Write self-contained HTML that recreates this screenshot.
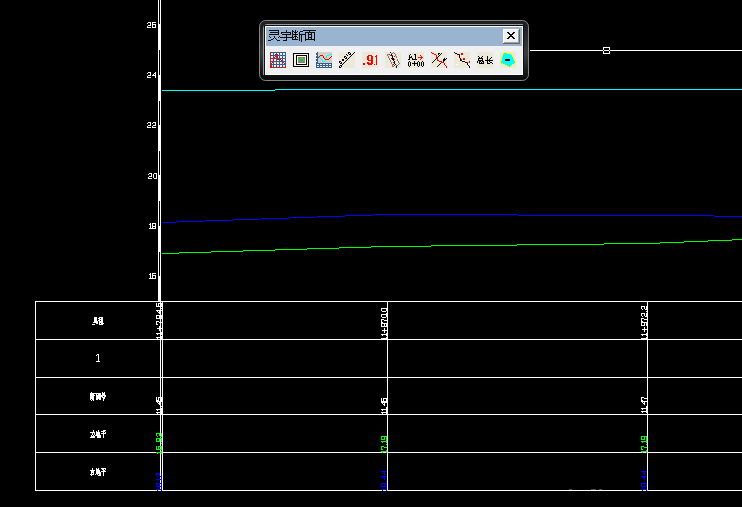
<!DOCTYPE html>
<html><head><meta charset="utf-8">
<style>
html,body{margin:0;padding:0;background:#000;font-family:"Liberation Sans",sans-serif;width:742px;height:507px;overflow:hidden;}
svg{position:absolute;left:0;top:0;display:block;}
#tb{position:absolute;left:259px;top:20px;width:270px;height:61px;}
</style></head><body>
<svg width="742" height="507" viewBox="0 0 742 507" shape-rendering="crispEdges">
<rect x="158" y="0" width="1" height="301" fill="#ffffff"/>
<rect x="160" y="0" width="1" height="301" fill="#ffffff"/>
<rect x="159" y="24" width="1" height="26" fill="#ffffff"/>
<rect x="159" y="75" width="1" height="26" fill="#ffffff"/>
<rect x="159" y="125" width="1" height="26" fill="#ffffff"/>
<rect x="159" y="175" width="1" height="26" fill="#ffffff"/>
<rect x="159" y="226" width="1" height="26" fill="#ffffff"/>
<rect x="159" y="276" width="1" height="25" fill="#ffffff"/>
<rect x="148" y="22" width="3" height="1" fill="#ffffff"/>
<rect x="147" y="23" width="1" height="1" fill="#ffffff"/>
<rect x="150" y="23" width="1" height="1" fill="#ffffff"/>
<rect x="150" y="24" width="1" height="1" fill="#ffffff"/>
<rect x="148" y="25" width="3" height="1" fill="#ffffff"/>
<rect x="147" y="26" width="1" height="1" fill="#ffffff"/>
<rect x="147" y="27" width="4" height="1" fill="#ffffff"/>
<rect x="152" y="22" width="4" height="1" fill="#ffffff"/>
<rect x="152" y="23" width="1" height="1" fill="#ffffff"/>
<rect x="152" y="24" width="4" height="1" fill="#ffffff"/>
<rect x="152" y="25" width="1" height="1" fill="#ffffff"/>
<rect x="155" y="25" width="1" height="1" fill="#ffffff"/>
<rect x="152" y="26" width="1" height="1" fill="#ffffff"/>
<rect x="155" y="26" width="1" height="1" fill="#ffffff"/>
<rect x="152" y="27" width="4" height="1" fill="#ffffff"/>
<rect x="148" y="72" width="3" height="1" fill="#ffffff"/>
<rect x="147" y="73" width="1" height="1" fill="#ffffff"/>
<rect x="150" y="73" width="1" height="1" fill="#ffffff"/>
<rect x="150" y="74" width="1" height="1" fill="#ffffff"/>
<rect x="148" y="75" width="3" height="1" fill="#ffffff"/>
<rect x="147" y="76" width="1" height="1" fill="#ffffff"/>
<rect x="147" y="77" width="4" height="1" fill="#ffffff"/>
<rect x="155" y="72" width="1" height="1" fill="#ffffff"/>
<rect x="154" y="73" width="2" height="1" fill="#ffffff"/>
<rect x="153" y="74" width="1" height="1" fill="#ffffff"/>
<rect x="155" y="74" width="1" height="1" fill="#ffffff"/>
<rect x="152" y="75" width="4" height="1" fill="#ffffff"/>
<rect x="155" y="76" width="1" height="1" fill="#ffffff"/>
<rect x="155" y="77" width="1" height="1" fill="#ffffff"/>
<rect x="148" y="122" width="3" height="1" fill="#ffffff"/>
<rect x="147" y="123" width="1" height="1" fill="#ffffff"/>
<rect x="150" y="123" width="1" height="1" fill="#ffffff"/>
<rect x="150" y="124" width="1" height="1" fill="#ffffff"/>
<rect x="148" y="125" width="3" height="1" fill="#ffffff"/>
<rect x="147" y="126" width="1" height="1" fill="#ffffff"/>
<rect x="147" y="127" width="4" height="1" fill="#ffffff"/>
<rect x="153" y="122" width="3" height="1" fill="#ffffff"/>
<rect x="152" y="123" width="1" height="1" fill="#ffffff"/>
<rect x="155" y="123" width="1" height="1" fill="#ffffff"/>
<rect x="155" y="124" width="1" height="1" fill="#ffffff"/>
<rect x="153" y="125" width="3" height="1" fill="#ffffff"/>
<rect x="152" y="126" width="1" height="1" fill="#ffffff"/>
<rect x="152" y="127" width="4" height="1" fill="#ffffff"/>
<rect x="149" y="173" width="3" height="1" fill="#ffffff"/>
<rect x="148" y="174" width="1" height="1" fill="#ffffff"/>
<rect x="151" y="174" width="1" height="1" fill="#ffffff"/>
<rect x="151" y="175" width="1" height="1" fill="#ffffff"/>
<rect x="149" y="176" width="3" height="1" fill="#ffffff"/>
<rect x="148" y="177" width="1" height="1" fill="#ffffff"/>
<rect x="148" y="178" width="4" height="1" fill="#ffffff"/>
<rect x="154" y="173" width="3" height="1" fill="#ffffff"/>
<rect x="153" y="174" width="1" height="1" fill="#ffffff"/>
<rect x="156" y="174" width="1" height="1" fill="#ffffff"/>
<rect x="153" y="175" width="1" height="1" fill="#ffffff"/>
<rect x="156" y="175" width="1" height="1" fill="#ffffff"/>
<rect x="153" y="176" width="1" height="1" fill="#ffffff"/>
<rect x="156" y="176" width="1" height="1" fill="#ffffff"/>
<rect x="153" y="177" width="1" height="1" fill="#ffffff"/>
<rect x="156" y="177" width="1" height="1" fill="#ffffff"/>
<rect x="154" y="178" width="3" height="1" fill="#ffffff"/>
<rect x="150" y="223" width="1" height="1" fill="#ffffff"/>
<rect x="149" y="224" width="2" height="1" fill="#ffffff"/>
<rect x="150" y="225" width="1" height="1" fill="#ffffff"/>
<rect x="150" y="226" width="1" height="1" fill="#ffffff"/>
<rect x="150" y="227" width="1" height="1" fill="#ffffff"/>
<rect x="149" y="228" width="3" height="1" fill="#ffffff"/>
<rect x="152" y="223" width="4" height="1" fill="#ffffff"/>
<rect x="152" y="224" width="1" height="1" fill="#ffffff"/>
<rect x="155" y="224" width="1" height="1" fill="#ffffff"/>
<rect x="152" y="225" width="1" height="1" fill="#ffffff"/>
<rect x="155" y="225" width="1" height="1" fill="#ffffff"/>
<rect x="152" y="226" width="4" height="1" fill="#ffffff"/>
<rect x="152" y="227" width="1" height="1" fill="#ffffff"/>
<rect x="155" y="227" width="1" height="1" fill="#ffffff"/>
<rect x="152" y="228" width="4" height="1" fill="#ffffff"/>
<rect x="150" y="273" width="1" height="1" fill="#ffffff"/>
<rect x="149" y="274" width="2" height="1" fill="#ffffff"/>
<rect x="150" y="275" width="1" height="1" fill="#ffffff"/>
<rect x="150" y="276" width="1" height="1" fill="#ffffff"/>
<rect x="150" y="277" width="1" height="1" fill="#ffffff"/>
<rect x="149" y="278" width="3" height="1" fill="#ffffff"/>
<rect x="152" y="273" width="4" height="1" fill="#ffffff"/>
<rect x="152" y="274" width="1" height="1" fill="#ffffff"/>
<rect x="152" y="275" width="4" height="1" fill="#ffffff"/>
<rect x="152" y="276" width="1" height="1" fill="#ffffff"/>
<rect x="155" y="276" width="1" height="1" fill="#ffffff"/>
<rect x="152" y="277" width="1" height="1" fill="#ffffff"/>
<rect x="155" y="277" width="1" height="1" fill="#ffffff"/>
<rect x="152" y="278" width="4" height="1" fill="#ffffff"/>
<rect x="530" y="50" width="212" height="1" fill="#ffffff"/>
<rect x="603.5" y="47.5" width="6" height="6" fill="none" stroke="#fff" stroke-width="1"/>
<rect x="603" y="50" width="1" height="1" fill="#000"/>
<rect x="609" y="50" width="1" height="1" fill="#000"/>
<rect x="162" y="90" width="113" height="1" fill="#00ffff"/>
<rect x="275" y="89" width="467" height="1" fill="#00ffff"/>
<rect x="162" y="222" width="15" height="1" fill="#0000ff"/>
<rect x="177" y="221" width="28" height="1" fill="#0000ff"/>
<rect x="205" y="220" width="28" height="1" fill="#0000ff"/>
<rect x="233" y="219" width="28" height="1" fill="#0000ff"/>
<rect x="261" y="218" width="28" height="1" fill="#0000ff"/>
<rect x="289" y="217" width="28" height="1" fill="#0000ff"/>
<rect x="317" y="216" width="28" height="1" fill="#0000ff"/>
<rect x="345" y="215" width="28" height="1" fill="#0000ff"/>
<rect x="373" y="214" width="145" height="1" fill="#0000ff"/>
<rect x="518" y="215" width="196" height="1" fill="#0000ff"/>
<rect x="714" y="216" width="28" height="1" fill="#0000ff"/>
<rect x="162" y="253" width="17" height="1" fill="#00ff00"/>
<rect x="179" y="252" width="32" height="1" fill="#00ff00"/>
<rect x="211" y="251" width="32" height="1" fill="#00ff00"/>
<rect x="243" y="250" width="32" height="1" fill="#00ff00"/>
<rect x="275" y="249" width="32" height="1" fill="#00ff00"/>
<rect x="307" y="248" width="32" height="1" fill="#00ff00"/>
<rect x="339" y="247" width="32" height="1" fill="#00ff00"/>
<rect x="371" y="246" width="60" height="1" fill="#00ff00"/>
<rect x="431" y="245" width="86" height="1" fill="#00ff00"/>
<rect x="517" y="244" width="87" height="1" fill="#00ff00"/>
<rect x="604" y="243" width="56" height="1" fill="#00ff00"/>
<rect x="660" y="242" width="24" height="1" fill="#00ff00"/>
<rect x="684" y="241" width="24" height="1" fill="#00ff00"/>
<rect x="708" y="240" width="24" height="1" fill="#00ff00"/>
<rect x="732" y="239" width="10" height="1" fill="#00ff00"/>
<rect x="35" y="301" width="707" height="1" fill="#ffffff"/>
<rect x="35" y="339" width="707" height="1" fill="#ffffff"/>
<rect x="35" y="377" width="707" height="1" fill="#ffffff"/>
<rect x="35" y="414" width="707" height="1" fill="#ffffff"/>
<rect x="35" y="452" width="707" height="1" fill="#ffffff"/>
<rect x="35" y="490" width="707" height="1" fill="#ffffff"/>
<rect x="35" y="301" width="1" height="190" fill="#ffffff"/>
<rect x="160" y="301" width="1" height="190" fill="#ffffff"/>
<rect x="162" y="301" width="1" height="190" fill="#ffffff"/>
<rect x="387" y="301" width="1" height="190" fill="#ffffff"/>
<rect x="647" y="301" width="1" height="190" fill="#ffffff"/>
<rect x="569" y="489" width="3" height="1" fill="#505050"/>
<rect x="591" y="489" width="5" height="1" fill="#505050"/>
<rect x="599" y="489" width="3" height="1" fill="#505050"/>
<rect x="156" y="337" width="1" height="1" fill="#ffffff"/>
<rect x="157" y="338" width="1" height="1" fill="#ffffff"/>
<rect x="157" y="337" width="1" height="1" fill="#ffffff"/>
<rect x="158" y="337" width="1" height="1" fill="#ffffff"/>
<rect x="159" y="337" width="1" height="1" fill="#ffffff"/>
<rect x="160" y="337" width="1" height="1" fill="#ffffff"/>
<rect x="161" y="338" width="1" height="1" fill="#ffffff"/>
<rect x="161" y="337" width="1" height="1" fill="#ffffff"/>
<rect x="161" y="336" width="1" height="1" fill="#ffffff"/>
<rect x="156" y="333" width="1" height="1" fill="#ffffff"/>
<rect x="157" y="334" width="1" height="1" fill="#ffffff"/>
<rect x="157" y="333" width="1" height="1" fill="#ffffff"/>
<rect x="158" y="333" width="1" height="1" fill="#ffffff"/>
<rect x="159" y="333" width="1" height="1" fill="#ffffff"/>
<rect x="160" y="333" width="1" height="1" fill="#ffffff"/>
<rect x="161" y="334" width="1" height="1" fill="#ffffff"/>
<rect x="161" y="333" width="1" height="1" fill="#ffffff"/>
<rect x="161" y="332" width="1" height="1" fill="#ffffff"/>
<rect x="157" y="328" width="1" height="1" fill="#ffffff"/>
<rect x="158" y="328" width="1" height="1" fill="#ffffff"/>
<rect x="159" y="330" width="1" height="1" fill="#ffffff"/>
<rect x="159" y="329" width="1" height="1" fill="#ffffff"/>
<rect x="159" y="328" width="1" height="1" fill="#ffffff"/>
<rect x="159" y="327" width="1" height="1" fill="#ffffff"/>
<rect x="159" y="326" width="1" height="1" fill="#ffffff"/>
<rect x="160" y="328" width="1" height="1" fill="#ffffff"/>
<rect x="161" y="328" width="1" height="1" fill="#ffffff"/>
<rect x="156" y="324" width="1" height="1" fill="#ffffff"/>
<rect x="156" y="323" width="1" height="1" fill="#ffffff"/>
<rect x="156" y="322" width="1" height="1" fill="#ffffff"/>
<rect x="156" y="321" width="1" height="1" fill="#ffffff"/>
<rect x="157" y="324" width="1" height="1" fill="#ffffff"/>
<rect x="157" y="321" width="1" height="1" fill="#ffffff"/>
<rect x="158" y="321" width="1" height="1" fill="#ffffff"/>
<rect x="159" y="322" width="1" height="1" fill="#ffffff"/>
<rect x="160" y="322" width="1" height="1" fill="#ffffff"/>
<rect x="161" y="322" width="1" height="1" fill="#ffffff"/>
<rect x="156" y="318" width="1" height="1" fill="#ffffff"/>
<rect x="156" y="317" width="1" height="1" fill="#ffffff"/>
<rect x="156" y="316" width="1" height="1" fill="#ffffff"/>
<rect x="156" y="315" width="1" height="1" fill="#ffffff"/>
<rect x="157" y="318" width="1" height="1" fill="#ffffff"/>
<rect x="157" y="315" width="1" height="1" fill="#ffffff"/>
<rect x="158" y="318" width="1" height="1" fill="#ffffff"/>
<rect x="158" y="315" width="1" height="1" fill="#ffffff"/>
<rect x="159" y="318" width="1" height="1" fill="#ffffff"/>
<rect x="159" y="317" width="1" height="1" fill="#ffffff"/>
<rect x="159" y="316" width="1" height="1" fill="#ffffff"/>
<rect x="159" y="315" width="1" height="1" fill="#ffffff"/>
<rect x="160" y="318" width="1" height="1" fill="#ffffff"/>
<rect x="160" y="315" width="1" height="1" fill="#ffffff"/>
<rect x="161" y="318" width="1" height="1" fill="#ffffff"/>
<rect x="161" y="317" width="1" height="1" fill="#ffffff"/>
<rect x="161" y="316" width="1" height="1" fill="#ffffff"/>
<rect x="161" y="315" width="1" height="1" fill="#ffffff"/>
<rect x="156" y="310" width="1" height="1" fill="#ffffff"/>
<rect x="157" y="311" width="1" height="1" fill="#ffffff"/>
<rect x="157" y="310" width="1" height="1" fill="#ffffff"/>
<rect x="158" y="312" width="1" height="1" fill="#ffffff"/>
<rect x="158" y="310" width="1" height="1" fill="#ffffff"/>
<rect x="159" y="313" width="1" height="1" fill="#ffffff"/>
<rect x="159" y="312" width="1" height="1" fill="#ffffff"/>
<rect x="159" y="311" width="1" height="1" fill="#ffffff"/>
<rect x="159" y="310" width="1" height="1" fill="#ffffff"/>
<rect x="160" y="310" width="1" height="1" fill="#ffffff"/>
<rect x="161" y="310" width="1" height="1" fill="#ffffff"/>
<rect x="161" y="308" width="1" height="1" fill="#ffffff"/>
<rect x="156" y="306" width="1" height="1" fill="#ffffff"/>
<rect x="156" y="305" width="1" height="1" fill="#ffffff"/>
<rect x="156" y="304" width="1" height="1" fill="#ffffff"/>
<rect x="156" y="303" width="1" height="1" fill="#ffffff"/>
<rect x="157" y="306" width="1" height="1" fill="#ffffff"/>
<rect x="158" y="306" width="1" height="1" fill="#ffffff"/>
<rect x="158" y="305" width="1" height="1" fill="#ffffff"/>
<rect x="158" y="304" width="1" height="1" fill="#ffffff"/>
<rect x="158" y="303" width="1" height="1" fill="#ffffff"/>
<rect x="159" y="306" width="1" height="1" fill="#ffffff"/>
<rect x="159" y="303" width="1" height="1" fill="#ffffff"/>
<rect x="160" y="306" width="1" height="1" fill="#ffffff"/>
<rect x="160" y="303" width="1" height="1" fill="#ffffff"/>
<rect x="161" y="306" width="1" height="1" fill="#ffffff"/>
<rect x="161" y="305" width="1" height="1" fill="#ffffff"/>
<rect x="161" y="304" width="1" height="1" fill="#ffffff"/>
<rect x="161" y="303" width="1" height="1" fill="#ffffff"/>
<rect x="156" y="412" width="1" height="1" fill="#ffffff"/>
<rect x="157" y="413" width="1" height="1" fill="#ffffff"/>
<rect x="157" y="412" width="1" height="1" fill="#ffffff"/>
<rect x="158" y="412" width="1" height="1" fill="#ffffff"/>
<rect x="159" y="412" width="1" height="1" fill="#ffffff"/>
<rect x="160" y="412" width="1" height="1" fill="#ffffff"/>
<rect x="161" y="413" width="1" height="1" fill="#ffffff"/>
<rect x="161" y="412" width="1" height="1" fill="#ffffff"/>
<rect x="161" y="411" width="1" height="1" fill="#ffffff"/>
<rect x="156" y="409" width="1" height="1" fill="#ffffff"/>
<rect x="157" y="410" width="1" height="1" fill="#ffffff"/>
<rect x="157" y="409" width="1" height="1" fill="#ffffff"/>
<rect x="158" y="409" width="1" height="1" fill="#ffffff"/>
<rect x="159" y="409" width="1" height="1" fill="#ffffff"/>
<rect x="160" y="409" width="1" height="1" fill="#ffffff"/>
<rect x="161" y="410" width="1" height="1" fill="#ffffff"/>
<rect x="161" y="409" width="1" height="1" fill="#ffffff"/>
<rect x="161" y="408" width="1" height="1" fill="#ffffff"/>
<rect x="161" y="406" width="1" height="1" fill="#ffffff"/>
<rect x="156" y="401" width="1" height="1" fill="#ffffff"/>
<rect x="157" y="402" width="1" height="1" fill="#ffffff"/>
<rect x="157" y="401" width="1" height="1" fill="#ffffff"/>
<rect x="158" y="403" width="1" height="1" fill="#ffffff"/>
<rect x="158" y="401" width="1" height="1" fill="#ffffff"/>
<rect x="159" y="404" width="1" height="1" fill="#ffffff"/>
<rect x="159" y="403" width="1" height="1" fill="#ffffff"/>
<rect x="159" y="402" width="1" height="1" fill="#ffffff"/>
<rect x="159" y="401" width="1" height="1" fill="#ffffff"/>
<rect x="160" y="401" width="1" height="1" fill="#ffffff"/>
<rect x="161" y="401" width="1" height="1" fill="#ffffff"/>
<rect x="156" y="400" width="1" height="1" fill="#ffffff"/>
<rect x="156" y="399" width="1" height="1" fill="#ffffff"/>
<rect x="156" y="398" width="1" height="1" fill="#ffffff"/>
<rect x="156" y="397" width="1" height="1" fill="#ffffff"/>
<rect x="157" y="400" width="1" height="1" fill="#ffffff"/>
<rect x="158" y="400" width="1" height="1" fill="#ffffff"/>
<rect x="158" y="399" width="1" height="1" fill="#ffffff"/>
<rect x="158" y="398" width="1" height="1" fill="#ffffff"/>
<rect x="158" y="397" width="1" height="1" fill="#ffffff"/>
<rect x="159" y="397" width="1" height="1" fill="#ffffff"/>
<rect x="160" y="397" width="1" height="1" fill="#ffffff"/>
<rect x="161" y="400" width="1" height="1" fill="#ffffff"/>
<rect x="161" y="399" width="1" height="1" fill="#ffffff"/>
<rect x="161" y="398" width="1" height="1" fill="#ffffff"/>
<rect x="161" y="397" width="1" height="1" fill="#ffffff"/>
<rect x="156" y="452" width="1" height="1" fill="#00ff00"/>
<rect x="157" y="453" width="1" height="1" fill="#00ff00"/>
<rect x="157" y="452" width="1" height="1" fill="#00ff00"/>
<rect x="158" y="452" width="1" height="1" fill="#00ff00"/>
<rect x="159" y="452" width="1" height="1" fill="#00ff00"/>
<rect x="160" y="452" width="1" height="1" fill="#00ff00"/>
<rect x="161" y="453" width="1" height="1" fill="#00ff00"/>
<rect x="161" y="452" width="1" height="1" fill="#00ff00"/>
<rect x="161" y="451" width="1" height="1" fill="#00ff00"/>
<rect x="156" y="449" width="1" height="1" fill="#00ff00"/>
<rect x="156" y="448" width="1" height="1" fill="#00ff00"/>
<rect x="156" y="447" width="1" height="1" fill="#00ff00"/>
<rect x="156" y="446" width="1" height="1" fill="#00ff00"/>
<rect x="157" y="449" width="1" height="1" fill="#00ff00"/>
<rect x="158" y="449" width="1" height="1" fill="#00ff00"/>
<rect x="158" y="448" width="1" height="1" fill="#00ff00"/>
<rect x="158" y="447" width="1" height="1" fill="#00ff00"/>
<rect x="158" y="446" width="1" height="1" fill="#00ff00"/>
<rect x="159" y="449" width="1" height="1" fill="#00ff00"/>
<rect x="159" y="446" width="1" height="1" fill="#00ff00"/>
<rect x="160" y="449" width="1" height="1" fill="#00ff00"/>
<rect x="160" y="446" width="1" height="1" fill="#00ff00"/>
<rect x="161" y="449" width="1" height="1" fill="#00ff00"/>
<rect x="161" y="448" width="1" height="1" fill="#00ff00"/>
<rect x="161" y="447" width="1" height="1" fill="#00ff00"/>
<rect x="161" y="446" width="1" height="1" fill="#00ff00"/>
<rect x="161" y="443" width="1" height="1" fill="#00ff00"/>
<rect x="156" y="441" width="1" height="1" fill="#00ff00"/>
<rect x="156" y="440" width="1" height="1" fill="#00ff00"/>
<rect x="156" y="439" width="1" height="1" fill="#00ff00"/>
<rect x="156" y="438" width="1" height="1" fill="#00ff00"/>
<rect x="157" y="441" width="1" height="1" fill="#00ff00"/>
<rect x="157" y="438" width="1" height="1" fill="#00ff00"/>
<rect x="158" y="441" width="1" height="1" fill="#00ff00"/>
<rect x="158" y="438" width="1" height="1" fill="#00ff00"/>
<rect x="159" y="441" width="1" height="1" fill="#00ff00"/>
<rect x="159" y="440" width="1" height="1" fill="#00ff00"/>
<rect x="159" y="439" width="1" height="1" fill="#00ff00"/>
<rect x="159" y="438" width="1" height="1" fill="#00ff00"/>
<rect x="160" y="438" width="1" height="1" fill="#00ff00"/>
<rect x="161" y="441" width="1" height="1" fill="#00ff00"/>
<rect x="161" y="440" width="1" height="1" fill="#00ff00"/>
<rect x="161" y="439" width="1" height="1" fill="#00ff00"/>
<rect x="161" y="438" width="1" height="1" fill="#00ff00"/>
<rect x="156" y="435" width="1" height="1" fill="#00ff00"/>
<rect x="156" y="434" width="1" height="1" fill="#00ff00"/>
<rect x="156" y="433" width="1" height="1" fill="#00ff00"/>
<rect x="157" y="436" width="1" height="1" fill="#00ff00"/>
<rect x="157" y="433" width="1" height="1" fill="#00ff00"/>
<rect x="158" y="433" width="1" height="1" fill="#00ff00"/>
<rect x="159" y="435" width="1" height="1" fill="#00ff00"/>
<rect x="159" y="434" width="1" height="1" fill="#00ff00"/>
<rect x="159" y="433" width="1" height="1" fill="#00ff00"/>
<rect x="160" y="436" width="1" height="1" fill="#00ff00"/>
<rect x="161" y="436" width="1" height="1" fill="#00ff00"/>
<rect x="161" y="435" width="1" height="1" fill="#00ff00"/>
<rect x="161" y="434" width="1" height="1" fill="#00ff00"/>
<rect x="161" y="433" width="1" height="1" fill="#00ff00"/>
<rect x="156" y="489" width="1" height="1" fill="#0000ff"/>
<rect x="157" y="490" width="1" height="1" fill="#0000ff"/>
<rect x="157" y="489" width="1" height="1" fill="#0000ff"/>
<rect x="158" y="489" width="1" height="1" fill="#0000ff"/>
<rect x="159" y="489" width="1" height="1" fill="#0000ff"/>
<rect x="160" y="489" width="1" height="1" fill="#0000ff"/>
<rect x="161" y="490" width="1" height="1" fill="#0000ff"/>
<rect x="161" y="489" width="1" height="1" fill="#0000ff"/>
<rect x="161" y="488" width="1" height="1" fill="#0000ff"/>
<rect x="156" y="486" width="1" height="1" fill="#0000ff"/>
<rect x="156" y="485" width="1" height="1" fill="#0000ff"/>
<rect x="156" y="484" width="1" height="1" fill="#0000ff"/>
<rect x="156" y="483" width="1" height="1" fill="#0000ff"/>
<rect x="157" y="486" width="1" height="1" fill="#0000ff"/>
<rect x="157" y="483" width="1" height="1" fill="#0000ff"/>
<rect x="158" y="486" width="1" height="1" fill="#0000ff"/>
<rect x="158" y="483" width="1" height="1" fill="#0000ff"/>
<rect x="159" y="486" width="1" height="1" fill="#0000ff"/>
<rect x="159" y="485" width="1" height="1" fill="#0000ff"/>
<rect x="159" y="484" width="1" height="1" fill="#0000ff"/>
<rect x="159" y="483" width="1" height="1" fill="#0000ff"/>
<rect x="160" y="486" width="1" height="1" fill="#0000ff"/>
<rect x="160" y="483" width="1" height="1" fill="#0000ff"/>
<rect x="161" y="486" width="1" height="1" fill="#0000ff"/>
<rect x="161" y="485" width="1" height="1" fill="#0000ff"/>
<rect x="161" y="484" width="1" height="1" fill="#0000ff"/>
<rect x="161" y="483" width="1" height="1" fill="#0000ff"/>
<rect x="161" y="482" width="1" height="1" fill="#0000ff"/>
<rect x="156" y="479" width="1" height="1" fill="#0000ff"/>
<rect x="157" y="480" width="1" height="1" fill="#0000ff"/>
<rect x="157" y="479" width="1" height="1" fill="#0000ff"/>
<rect x="158" y="479" width="1" height="1" fill="#0000ff"/>
<rect x="159" y="479" width="1" height="1" fill="#0000ff"/>
<rect x="160" y="479" width="1" height="1" fill="#0000ff"/>
<rect x="161" y="480" width="1" height="1" fill="#0000ff"/>
<rect x="161" y="479" width="1" height="1" fill="#0000ff"/>
<rect x="161" y="478" width="1" height="1" fill="#0000ff"/>
<rect x="156" y="475" width="1" height="1" fill="#0000ff"/>
<rect x="156" y="474" width="1" height="1" fill="#0000ff"/>
<rect x="156" y="473" width="1" height="1" fill="#0000ff"/>
<rect x="157" y="476" width="1" height="1" fill="#0000ff"/>
<rect x="157" y="473" width="1" height="1" fill="#0000ff"/>
<rect x="158" y="473" width="1" height="1" fill="#0000ff"/>
<rect x="159" y="475" width="1" height="1" fill="#0000ff"/>
<rect x="159" y="474" width="1" height="1" fill="#0000ff"/>
<rect x="159" y="473" width="1" height="1" fill="#0000ff"/>
<rect x="160" y="476" width="1" height="1" fill="#0000ff"/>
<rect x="161" y="476" width="1" height="1" fill="#0000ff"/>
<rect x="161" y="475" width="1" height="1" fill="#0000ff"/>
<rect x="161" y="474" width="1" height="1" fill="#0000ff"/>
<rect x="161" y="473" width="1" height="1" fill="#0000ff"/>
<rect x="381" y="338" width="1" height="1" fill="#ffffff"/>
<rect x="382" y="339" width="1" height="1" fill="#ffffff"/>
<rect x="382" y="338" width="1" height="1" fill="#ffffff"/>
<rect x="383" y="338" width="1" height="1" fill="#ffffff"/>
<rect x="384" y="338" width="1" height="1" fill="#ffffff"/>
<rect x="385" y="338" width="1" height="1" fill="#ffffff"/>
<rect x="386" y="339" width="1" height="1" fill="#ffffff"/>
<rect x="386" y="338" width="1" height="1" fill="#ffffff"/>
<rect x="386" y="337" width="1" height="1" fill="#ffffff"/>
<rect x="381" y="334" width="1" height="1" fill="#ffffff"/>
<rect x="382" y="335" width="1" height="1" fill="#ffffff"/>
<rect x="382" y="334" width="1" height="1" fill="#ffffff"/>
<rect x="383" y="334" width="1" height="1" fill="#ffffff"/>
<rect x="384" y="334" width="1" height="1" fill="#ffffff"/>
<rect x="385" y="334" width="1" height="1" fill="#ffffff"/>
<rect x="386" y="335" width="1" height="1" fill="#ffffff"/>
<rect x="386" y="334" width="1" height="1" fill="#ffffff"/>
<rect x="386" y="333" width="1" height="1" fill="#ffffff"/>
<rect x="382" y="330" width="1" height="1" fill="#ffffff"/>
<rect x="383" y="330" width="1" height="1" fill="#ffffff"/>
<rect x="384" y="332" width="1" height="1" fill="#ffffff"/>
<rect x="384" y="331" width="1" height="1" fill="#ffffff"/>
<rect x="384" y="330" width="1" height="1" fill="#ffffff"/>
<rect x="384" y="329" width="1" height="1" fill="#ffffff"/>
<rect x="384" y="328" width="1" height="1" fill="#ffffff"/>
<rect x="385" y="330" width="1" height="1" fill="#ffffff"/>
<rect x="386" y="330" width="1" height="1" fill="#ffffff"/>
<rect x="381" y="326" width="1" height="1" fill="#ffffff"/>
<rect x="381" y="325" width="1" height="1" fill="#ffffff"/>
<rect x="381" y="324" width="1" height="1" fill="#ffffff"/>
<rect x="381" y="323" width="1" height="1" fill="#ffffff"/>
<rect x="382" y="326" width="1" height="1" fill="#ffffff"/>
<rect x="382" y="323" width="1" height="1" fill="#ffffff"/>
<rect x="383" y="326" width="1" height="1" fill="#ffffff"/>
<rect x="383" y="323" width="1" height="1" fill="#ffffff"/>
<rect x="384" y="326" width="1" height="1" fill="#ffffff"/>
<rect x="384" y="325" width="1" height="1" fill="#ffffff"/>
<rect x="384" y="324" width="1" height="1" fill="#ffffff"/>
<rect x="384" y="323" width="1" height="1" fill="#ffffff"/>
<rect x="385" y="326" width="1" height="1" fill="#ffffff"/>
<rect x="385" y="323" width="1" height="1" fill="#ffffff"/>
<rect x="386" y="326" width="1" height="1" fill="#ffffff"/>
<rect x="386" y="325" width="1" height="1" fill="#ffffff"/>
<rect x="386" y="324" width="1" height="1" fill="#ffffff"/>
<rect x="386" y="323" width="1" height="1" fill="#ffffff"/>
<rect x="381" y="322" width="1" height="1" fill="#ffffff"/>
<rect x="381" y="321" width="1" height="1" fill="#ffffff"/>
<rect x="381" y="320" width="1" height="1" fill="#ffffff"/>
<rect x="381" y="319" width="1" height="1" fill="#ffffff"/>
<rect x="382" y="322" width="1" height="1" fill="#ffffff"/>
<rect x="382" y="319" width="1" height="1" fill="#ffffff"/>
<rect x="383" y="319" width="1" height="1" fill="#ffffff"/>
<rect x="384" y="320" width="1" height="1" fill="#ffffff"/>
<rect x="385" y="320" width="1" height="1" fill="#ffffff"/>
<rect x="386" y="320" width="1" height="1" fill="#ffffff"/>
<rect x="381" y="316" width="1" height="1" fill="#ffffff"/>
<rect x="381" y="315" width="1" height="1" fill="#ffffff"/>
<rect x="381" y="314" width="1" height="1" fill="#ffffff"/>
<rect x="382" y="317" width="1" height="1" fill="#ffffff"/>
<rect x="382" y="314" width="1" height="1" fill="#ffffff"/>
<rect x="383" y="317" width="1" height="1" fill="#ffffff"/>
<rect x="383" y="314" width="1" height="1" fill="#ffffff"/>
<rect x="384" y="317" width="1" height="1" fill="#ffffff"/>
<rect x="384" y="314" width="1" height="1" fill="#ffffff"/>
<rect x="385" y="317" width="1" height="1" fill="#ffffff"/>
<rect x="385" y="314" width="1" height="1" fill="#ffffff"/>
<rect x="386" y="316" width="1" height="1" fill="#ffffff"/>
<rect x="386" y="315" width="1" height="1" fill="#ffffff"/>
<rect x="386" y="314" width="1" height="1" fill="#ffffff"/>
<rect x="386" y="313" width="1" height="1" fill="#ffffff"/>
<rect x="381" y="310" width="1" height="1" fill="#ffffff"/>
<rect x="381" y="309" width="1" height="1" fill="#ffffff"/>
<rect x="381" y="308" width="1" height="1" fill="#ffffff"/>
<rect x="382" y="311" width="1" height="1" fill="#ffffff"/>
<rect x="382" y="308" width="1" height="1" fill="#ffffff"/>
<rect x="383" y="311" width="1" height="1" fill="#ffffff"/>
<rect x="383" y="308" width="1" height="1" fill="#ffffff"/>
<rect x="384" y="311" width="1" height="1" fill="#ffffff"/>
<rect x="384" y="308" width="1" height="1" fill="#ffffff"/>
<rect x="385" y="311" width="1" height="1" fill="#ffffff"/>
<rect x="385" y="308" width="1" height="1" fill="#ffffff"/>
<rect x="386" y="310" width="1" height="1" fill="#ffffff"/>
<rect x="386" y="309" width="1" height="1" fill="#ffffff"/>
<rect x="386" y="308" width="1" height="1" fill="#ffffff"/>
<rect x="381" y="412" width="1" height="1" fill="#ffffff"/>
<rect x="382" y="413" width="1" height="1" fill="#ffffff"/>
<rect x="382" y="412" width="1" height="1" fill="#ffffff"/>
<rect x="383" y="412" width="1" height="1" fill="#ffffff"/>
<rect x="384" y="412" width="1" height="1" fill="#ffffff"/>
<rect x="385" y="412" width="1" height="1" fill="#ffffff"/>
<rect x="386" y="413" width="1" height="1" fill="#ffffff"/>
<rect x="386" y="412" width="1" height="1" fill="#ffffff"/>
<rect x="386" y="411" width="1" height="1" fill="#ffffff"/>
<rect x="381" y="409" width="1" height="1" fill="#ffffff"/>
<rect x="382" y="410" width="1" height="1" fill="#ffffff"/>
<rect x="382" y="409" width="1" height="1" fill="#ffffff"/>
<rect x="383" y="409" width="1" height="1" fill="#ffffff"/>
<rect x="384" y="409" width="1" height="1" fill="#ffffff"/>
<rect x="385" y="409" width="1" height="1" fill="#ffffff"/>
<rect x="386" y="410" width="1" height="1" fill="#ffffff"/>
<rect x="386" y="409" width="1" height="1" fill="#ffffff"/>
<rect x="386" y="408" width="1" height="1" fill="#ffffff"/>
<rect x="386" y="407" width="1" height="1" fill="#ffffff"/>
<rect x="381" y="402" width="1" height="1" fill="#ffffff"/>
<rect x="382" y="403" width="1" height="1" fill="#ffffff"/>
<rect x="382" y="402" width="1" height="1" fill="#ffffff"/>
<rect x="383" y="404" width="1" height="1" fill="#ffffff"/>
<rect x="383" y="402" width="1" height="1" fill="#ffffff"/>
<rect x="384" y="405" width="1" height="1" fill="#ffffff"/>
<rect x="384" y="404" width="1" height="1" fill="#ffffff"/>
<rect x="384" y="403" width="1" height="1" fill="#ffffff"/>
<rect x="384" y="402" width="1" height="1" fill="#ffffff"/>
<rect x="385" y="402" width="1" height="1" fill="#ffffff"/>
<rect x="386" y="402" width="1" height="1" fill="#ffffff"/>
<rect x="381" y="401" width="1" height="1" fill="#ffffff"/>
<rect x="381" y="400" width="1" height="1" fill="#ffffff"/>
<rect x="381" y="399" width="1" height="1" fill="#ffffff"/>
<rect x="381" y="398" width="1" height="1" fill="#ffffff"/>
<rect x="382" y="401" width="1" height="1" fill="#ffffff"/>
<rect x="383" y="401" width="1" height="1" fill="#ffffff"/>
<rect x="383" y="400" width="1" height="1" fill="#ffffff"/>
<rect x="383" y="399" width="1" height="1" fill="#ffffff"/>
<rect x="383" y="398" width="1" height="1" fill="#ffffff"/>
<rect x="384" y="401" width="1" height="1" fill="#ffffff"/>
<rect x="384" y="398" width="1" height="1" fill="#ffffff"/>
<rect x="385" y="401" width="1" height="1" fill="#ffffff"/>
<rect x="385" y="398" width="1" height="1" fill="#ffffff"/>
<rect x="386" y="401" width="1" height="1" fill="#ffffff"/>
<rect x="386" y="400" width="1" height="1" fill="#ffffff"/>
<rect x="386" y="399" width="1" height="1" fill="#ffffff"/>
<rect x="386" y="398" width="1" height="1" fill="#ffffff"/>
<rect x="381" y="451" width="1" height="1" fill="#00ff00"/>
<rect x="382" y="452" width="1" height="1" fill="#00ff00"/>
<rect x="382" y="451" width="1" height="1" fill="#00ff00"/>
<rect x="383" y="451" width="1" height="1" fill="#00ff00"/>
<rect x="384" y="451" width="1" height="1" fill="#00ff00"/>
<rect x="385" y="451" width="1" height="1" fill="#00ff00"/>
<rect x="386" y="452" width="1" height="1" fill="#00ff00"/>
<rect x="386" y="451" width="1" height="1" fill="#00ff00"/>
<rect x="386" y="450" width="1" height="1" fill="#00ff00"/>
<rect x="381" y="449" width="1" height="1" fill="#00ff00"/>
<rect x="381" y="448" width="1" height="1" fill="#00ff00"/>
<rect x="381" y="447" width="1" height="1" fill="#00ff00"/>
<rect x="381" y="446" width="1" height="1" fill="#00ff00"/>
<rect x="382" y="449" width="1" height="1" fill="#00ff00"/>
<rect x="382" y="446" width="1" height="1" fill="#00ff00"/>
<rect x="383" y="446" width="1" height="1" fill="#00ff00"/>
<rect x="384" y="447" width="1" height="1" fill="#00ff00"/>
<rect x="385" y="447" width="1" height="1" fill="#00ff00"/>
<rect x="386" y="447" width="1" height="1" fill="#00ff00"/>
<rect x="386" y="444" width="1" height="1" fill="#00ff00"/>
<rect x="381" y="441" width="1" height="1" fill="#00ff00"/>
<rect x="382" y="442" width="1" height="1" fill="#00ff00"/>
<rect x="382" y="441" width="1" height="1" fill="#00ff00"/>
<rect x="383" y="441" width="1" height="1" fill="#00ff00"/>
<rect x="384" y="441" width="1" height="1" fill="#00ff00"/>
<rect x="385" y="441" width="1" height="1" fill="#00ff00"/>
<rect x="386" y="442" width="1" height="1" fill="#00ff00"/>
<rect x="386" y="441" width="1" height="1" fill="#00ff00"/>
<rect x="386" y="440" width="1" height="1" fill="#00ff00"/>
<rect x="381" y="439" width="1" height="1" fill="#00ff00"/>
<rect x="381" y="438" width="1" height="1" fill="#00ff00"/>
<rect x="381" y="437" width="1" height="1" fill="#00ff00"/>
<rect x="381" y="436" width="1" height="1" fill="#00ff00"/>
<rect x="382" y="439" width="1" height="1" fill="#00ff00"/>
<rect x="382" y="436" width="1" height="1" fill="#00ff00"/>
<rect x="383" y="439" width="1" height="1" fill="#00ff00"/>
<rect x="383" y="436" width="1" height="1" fill="#00ff00"/>
<rect x="384" y="439" width="1" height="1" fill="#00ff00"/>
<rect x="384" y="438" width="1" height="1" fill="#00ff00"/>
<rect x="384" y="437" width="1" height="1" fill="#00ff00"/>
<rect x="384" y="436" width="1" height="1" fill="#00ff00"/>
<rect x="385" y="436" width="1" height="1" fill="#00ff00"/>
<rect x="386" y="439" width="1" height="1" fill="#00ff00"/>
<rect x="386" y="438" width="1" height="1" fill="#00ff00"/>
<rect x="386" y="437" width="1" height="1" fill="#00ff00"/>
<rect x="386" y="436" width="1" height="1" fill="#00ff00"/>
<rect x="381" y="489" width="1" height="1" fill="#0000ff"/>
<rect x="382" y="490" width="1" height="1" fill="#0000ff"/>
<rect x="382" y="489" width="1" height="1" fill="#0000ff"/>
<rect x="383" y="489" width="1" height="1" fill="#0000ff"/>
<rect x="384" y="489" width="1" height="1" fill="#0000ff"/>
<rect x="385" y="489" width="1" height="1" fill="#0000ff"/>
<rect x="386" y="490" width="1" height="1" fill="#0000ff"/>
<rect x="386" y="489" width="1" height="1" fill="#0000ff"/>
<rect x="386" y="488" width="1" height="1" fill="#0000ff"/>
<rect x="381" y="486" width="1" height="1" fill="#0000ff"/>
<rect x="381" y="485" width="1" height="1" fill="#0000ff"/>
<rect x="381" y="484" width="1" height="1" fill="#0000ff"/>
<rect x="381" y="483" width="1" height="1" fill="#0000ff"/>
<rect x="382" y="486" width="1" height="1" fill="#0000ff"/>
<rect x="382" y="483" width="1" height="1" fill="#0000ff"/>
<rect x="383" y="486" width="1" height="1" fill="#0000ff"/>
<rect x="383" y="483" width="1" height="1" fill="#0000ff"/>
<rect x="384" y="486" width="1" height="1" fill="#0000ff"/>
<rect x="384" y="485" width="1" height="1" fill="#0000ff"/>
<rect x="384" y="484" width="1" height="1" fill="#0000ff"/>
<rect x="384" y="483" width="1" height="1" fill="#0000ff"/>
<rect x="385" y="486" width="1" height="1" fill="#0000ff"/>
<rect x="385" y="483" width="1" height="1" fill="#0000ff"/>
<rect x="386" y="486" width="1" height="1" fill="#0000ff"/>
<rect x="386" y="485" width="1" height="1" fill="#0000ff"/>
<rect x="386" y="484" width="1" height="1" fill="#0000ff"/>
<rect x="386" y="483" width="1" height="1" fill="#0000ff"/>
<rect x="386" y="481" width="1" height="1" fill="#0000ff"/>
<rect x="381" y="476" width="1" height="1" fill="#0000ff"/>
<rect x="382" y="477" width="1" height="1" fill="#0000ff"/>
<rect x="382" y="476" width="1" height="1" fill="#0000ff"/>
<rect x="383" y="478" width="1" height="1" fill="#0000ff"/>
<rect x="383" y="476" width="1" height="1" fill="#0000ff"/>
<rect x="384" y="479" width="1" height="1" fill="#0000ff"/>
<rect x="384" y="478" width="1" height="1" fill="#0000ff"/>
<rect x="384" y="477" width="1" height="1" fill="#0000ff"/>
<rect x="384" y="476" width="1" height="1" fill="#0000ff"/>
<rect x="385" y="476" width="1" height="1" fill="#0000ff"/>
<rect x="386" y="476" width="1" height="1" fill="#0000ff"/>
<rect x="381" y="471" width="1" height="1" fill="#0000ff"/>
<rect x="382" y="472" width="1" height="1" fill="#0000ff"/>
<rect x="382" y="471" width="1" height="1" fill="#0000ff"/>
<rect x="383" y="473" width="1" height="1" fill="#0000ff"/>
<rect x="383" y="471" width="1" height="1" fill="#0000ff"/>
<rect x="384" y="474" width="1" height="1" fill="#0000ff"/>
<rect x="384" y="473" width="1" height="1" fill="#0000ff"/>
<rect x="384" y="472" width="1" height="1" fill="#0000ff"/>
<rect x="384" y="471" width="1" height="1" fill="#0000ff"/>
<rect x="385" y="471" width="1" height="1" fill="#0000ff"/>
<rect x="386" y="471" width="1" height="1" fill="#0000ff"/>
<rect x="641" y="338" width="1" height="1" fill="#ffffff"/>
<rect x="642" y="339" width="1" height="1" fill="#ffffff"/>
<rect x="642" y="338" width="1" height="1" fill="#ffffff"/>
<rect x="643" y="338" width="1" height="1" fill="#ffffff"/>
<rect x="644" y="338" width="1" height="1" fill="#ffffff"/>
<rect x="645" y="338" width="1" height="1" fill="#ffffff"/>
<rect x="646" y="339" width="1" height="1" fill="#ffffff"/>
<rect x="646" y="338" width="1" height="1" fill="#ffffff"/>
<rect x="646" y="337" width="1" height="1" fill="#ffffff"/>
<rect x="641" y="334" width="1" height="1" fill="#ffffff"/>
<rect x="642" y="335" width="1" height="1" fill="#ffffff"/>
<rect x="642" y="334" width="1" height="1" fill="#ffffff"/>
<rect x="643" y="334" width="1" height="1" fill="#ffffff"/>
<rect x="644" y="334" width="1" height="1" fill="#ffffff"/>
<rect x="645" y="334" width="1" height="1" fill="#ffffff"/>
<rect x="646" y="335" width="1" height="1" fill="#ffffff"/>
<rect x="646" y="334" width="1" height="1" fill="#ffffff"/>
<rect x="646" y="333" width="1" height="1" fill="#ffffff"/>
<rect x="642" y="329" width="1" height="1" fill="#ffffff"/>
<rect x="643" y="329" width="1" height="1" fill="#ffffff"/>
<rect x="644" y="331" width="1" height="1" fill="#ffffff"/>
<rect x="644" y="330" width="1" height="1" fill="#ffffff"/>
<rect x="644" y="329" width="1" height="1" fill="#ffffff"/>
<rect x="644" y="328" width="1" height="1" fill="#ffffff"/>
<rect x="644" y="327" width="1" height="1" fill="#ffffff"/>
<rect x="645" y="329" width="1" height="1" fill="#ffffff"/>
<rect x="646" y="329" width="1" height="1" fill="#ffffff"/>
<rect x="641" y="325" width="1" height="1" fill="#ffffff"/>
<rect x="641" y="324" width="1" height="1" fill="#ffffff"/>
<rect x="641" y="323" width="1" height="1" fill="#ffffff"/>
<rect x="641" y="322" width="1" height="1" fill="#ffffff"/>
<rect x="642" y="325" width="1" height="1" fill="#ffffff"/>
<rect x="642" y="322" width="1" height="1" fill="#ffffff"/>
<rect x="643" y="325" width="1" height="1" fill="#ffffff"/>
<rect x="643" y="322" width="1" height="1" fill="#ffffff"/>
<rect x="644" y="325" width="1" height="1" fill="#ffffff"/>
<rect x="644" y="324" width="1" height="1" fill="#ffffff"/>
<rect x="644" y="323" width="1" height="1" fill="#ffffff"/>
<rect x="644" y="322" width="1" height="1" fill="#ffffff"/>
<rect x="645" y="322" width="1" height="1" fill="#ffffff"/>
<rect x="646" y="325" width="1" height="1" fill="#ffffff"/>
<rect x="646" y="324" width="1" height="1" fill="#ffffff"/>
<rect x="646" y="323" width="1" height="1" fill="#ffffff"/>
<rect x="646" y="322" width="1" height="1" fill="#ffffff"/>
<rect x="641" y="321" width="1" height="1" fill="#ffffff"/>
<rect x="641" y="320" width="1" height="1" fill="#ffffff"/>
<rect x="641" y="319" width="1" height="1" fill="#ffffff"/>
<rect x="641" y="318" width="1" height="1" fill="#ffffff"/>
<rect x="642" y="321" width="1" height="1" fill="#ffffff"/>
<rect x="642" y="318" width="1" height="1" fill="#ffffff"/>
<rect x="643" y="318" width="1" height="1" fill="#ffffff"/>
<rect x="644" y="319" width="1" height="1" fill="#ffffff"/>
<rect x="645" y="319" width="1" height="1" fill="#ffffff"/>
<rect x="646" y="319" width="1" height="1" fill="#ffffff"/>
<rect x="641" y="315" width="1" height="1" fill="#ffffff"/>
<rect x="641" y="314" width="1" height="1" fill="#ffffff"/>
<rect x="641" y="313" width="1" height="1" fill="#ffffff"/>
<rect x="642" y="316" width="1" height="1" fill="#ffffff"/>
<rect x="642" y="313" width="1" height="1" fill="#ffffff"/>
<rect x="643" y="313" width="1" height="1" fill="#ffffff"/>
<rect x="644" y="315" width="1" height="1" fill="#ffffff"/>
<rect x="644" y="314" width="1" height="1" fill="#ffffff"/>
<rect x="644" y="313" width="1" height="1" fill="#ffffff"/>
<rect x="645" y="316" width="1" height="1" fill="#ffffff"/>
<rect x="646" y="316" width="1" height="1" fill="#ffffff"/>
<rect x="646" y="315" width="1" height="1" fill="#ffffff"/>
<rect x="646" y="314" width="1" height="1" fill="#ffffff"/>
<rect x="646" y="313" width="1" height="1" fill="#ffffff"/>
<rect x="646" y="311" width="1" height="1" fill="#ffffff"/>
<rect x="641" y="308" width="1" height="1" fill="#ffffff"/>
<rect x="641" y="307" width="1" height="1" fill="#ffffff"/>
<rect x="641" y="306" width="1" height="1" fill="#ffffff"/>
<rect x="642" y="309" width="1" height="1" fill="#ffffff"/>
<rect x="642" y="306" width="1" height="1" fill="#ffffff"/>
<rect x="643" y="306" width="1" height="1" fill="#ffffff"/>
<rect x="644" y="308" width="1" height="1" fill="#ffffff"/>
<rect x="644" y="307" width="1" height="1" fill="#ffffff"/>
<rect x="644" y="306" width="1" height="1" fill="#ffffff"/>
<rect x="645" y="309" width="1" height="1" fill="#ffffff"/>
<rect x="646" y="309" width="1" height="1" fill="#ffffff"/>
<rect x="646" y="308" width="1" height="1" fill="#ffffff"/>
<rect x="646" y="307" width="1" height="1" fill="#ffffff"/>
<rect x="646" y="306" width="1" height="1" fill="#ffffff"/>
<rect x="641" y="411" width="1" height="1" fill="#ffffff"/>
<rect x="642" y="412" width="1" height="1" fill="#ffffff"/>
<rect x="642" y="411" width="1" height="1" fill="#ffffff"/>
<rect x="643" y="411" width="1" height="1" fill="#ffffff"/>
<rect x="644" y="411" width="1" height="1" fill="#ffffff"/>
<rect x="645" y="411" width="1" height="1" fill="#ffffff"/>
<rect x="646" y="412" width="1" height="1" fill="#ffffff"/>
<rect x="646" y="411" width="1" height="1" fill="#ffffff"/>
<rect x="646" y="410" width="1" height="1" fill="#ffffff"/>
<rect x="641" y="408" width="1" height="1" fill="#ffffff"/>
<rect x="642" y="409" width="1" height="1" fill="#ffffff"/>
<rect x="642" y="408" width="1" height="1" fill="#ffffff"/>
<rect x="643" y="408" width="1" height="1" fill="#ffffff"/>
<rect x="644" y="408" width="1" height="1" fill="#ffffff"/>
<rect x="645" y="408" width="1" height="1" fill="#ffffff"/>
<rect x="646" y="409" width="1" height="1" fill="#ffffff"/>
<rect x="646" y="408" width="1" height="1" fill="#ffffff"/>
<rect x="646" y="407" width="1" height="1" fill="#ffffff"/>
<rect x="646" y="406" width="1" height="1" fill="#ffffff"/>
<rect x="641" y="401" width="1" height="1" fill="#ffffff"/>
<rect x="642" y="402" width="1" height="1" fill="#ffffff"/>
<rect x="642" y="401" width="1" height="1" fill="#ffffff"/>
<rect x="643" y="403" width="1" height="1" fill="#ffffff"/>
<rect x="643" y="401" width="1" height="1" fill="#ffffff"/>
<rect x="644" y="404" width="1" height="1" fill="#ffffff"/>
<rect x="644" y="403" width="1" height="1" fill="#ffffff"/>
<rect x="644" y="402" width="1" height="1" fill="#ffffff"/>
<rect x="644" y="401" width="1" height="1" fill="#ffffff"/>
<rect x="645" y="401" width="1" height="1" fill="#ffffff"/>
<rect x="646" y="401" width="1" height="1" fill="#ffffff"/>
<rect x="641" y="400" width="1" height="1" fill="#ffffff"/>
<rect x="641" y="399" width="1" height="1" fill="#ffffff"/>
<rect x="641" y="398" width="1" height="1" fill="#ffffff"/>
<rect x="641" y="397" width="1" height="1" fill="#ffffff"/>
<rect x="642" y="400" width="1" height="1" fill="#ffffff"/>
<rect x="642" y="397" width="1" height="1" fill="#ffffff"/>
<rect x="643" y="397" width="1" height="1" fill="#ffffff"/>
<rect x="644" y="398" width="1" height="1" fill="#ffffff"/>
<rect x="645" y="398" width="1" height="1" fill="#ffffff"/>
<rect x="646" y="398" width="1" height="1" fill="#ffffff"/>
<rect x="641" y="451" width="1" height="1" fill="#00ff00"/>
<rect x="642" y="452" width="1" height="1" fill="#00ff00"/>
<rect x="642" y="451" width="1" height="1" fill="#00ff00"/>
<rect x="643" y="451" width="1" height="1" fill="#00ff00"/>
<rect x="644" y="451" width="1" height="1" fill="#00ff00"/>
<rect x="645" y="451" width="1" height="1" fill="#00ff00"/>
<rect x="646" y="452" width="1" height="1" fill="#00ff00"/>
<rect x="646" y="451" width="1" height="1" fill="#00ff00"/>
<rect x="646" y="450" width="1" height="1" fill="#00ff00"/>
<rect x="641" y="449" width="1" height="1" fill="#00ff00"/>
<rect x="641" y="448" width="1" height="1" fill="#00ff00"/>
<rect x="641" y="447" width="1" height="1" fill="#00ff00"/>
<rect x="641" y="446" width="1" height="1" fill="#00ff00"/>
<rect x="642" y="449" width="1" height="1" fill="#00ff00"/>
<rect x="642" y="446" width="1" height="1" fill="#00ff00"/>
<rect x="643" y="446" width="1" height="1" fill="#00ff00"/>
<rect x="644" y="447" width="1" height="1" fill="#00ff00"/>
<rect x="645" y="447" width="1" height="1" fill="#00ff00"/>
<rect x="646" y="447" width="1" height="1" fill="#00ff00"/>
<rect x="646" y="444" width="1" height="1" fill="#00ff00"/>
<rect x="641" y="441" width="1" height="1" fill="#00ff00"/>
<rect x="642" y="442" width="1" height="1" fill="#00ff00"/>
<rect x="642" y="441" width="1" height="1" fill="#00ff00"/>
<rect x="643" y="441" width="1" height="1" fill="#00ff00"/>
<rect x="644" y="441" width="1" height="1" fill="#00ff00"/>
<rect x="645" y="441" width="1" height="1" fill="#00ff00"/>
<rect x="646" y="442" width="1" height="1" fill="#00ff00"/>
<rect x="646" y="441" width="1" height="1" fill="#00ff00"/>
<rect x="646" y="440" width="1" height="1" fill="#00ff00"/>
<rect x="641" y="439" width="1" height="1" fill="#00ff00"/>
<rect x="641" y="438" width="1" height="1" fill="#00ff00"/>
<rect x="641" y="437" width="1" height="1" fill="#00ff00"/>
<rect x="641" y="436" width="1" height="1" fill="#00ff00"/>
<rect x="642" y="439" width="1" height="1" fill="#00ff00"/>
<rect x="642" y="436" width="1" height="1" fill="#00ff00"/>
<rect x="643" y="439" width="1" height="1" fill="#00ff00"/>
<rect x="643" y="436" width="1" height="1" fill="#00ff00"/>
<rect x="644" y="439" width="1" height="1" fill="#00ff00"/>
<rect x="644" y="438" width="1" height="1" fill="#00ff00"/>
<rect x="644" y="437" width="1" height="1" fill="#00ff00"/>
<rect x="644" y="436" width="1" height="1" fill="#00ff00"/>
<rect x="645" y="436" width="1" height="1" fill="#00ff00"/>
<rect x="646" y="439" width="1" height="1" fill="#00ff00"/>
<rect x="646" y="438" width="1" height="1" fill="#00ff00"/>
<rect x="646" y="437" width="1" height="1" fill="#00ff00"/>
<rect x="646" y="436" width="1" height="1" fill="#00ff00"/>
<rect x="641" y="489" width="1" height="1" fill="#0000ff"/>
<rect x="642" y="490" width="1" height="1" fill="#0000ff"/>
<rect x="642" y="489" width="1" height="1" fill="#0000ff"/>
<rect x="643" y="489" width="1" height="1" fill="#0000ff"/>
<rect x="644" y="489" width="1" height="1" fill="#0000ff"/>
<rect x="645" y="489" width="1" height="1" fill="#0000ff"/>
<rect x="646" y="490" width="1" height="1" fill="#0000ff"/>
<rect x="646" y="489" width="1" height="1" fill="#0000ff"/>
<rect x="646" y="488" width="1" height="1" fill="#0000ff"/>
<rect x="641" y="486" width="1" height="1" fill="#0000ff"/>
<rect x="641" y="485" width="1" height="1" fill="#0000ff"/>
<rect x="641" y="484" width="1" height="1" fill="#0000ff"/>
<rect x="641" y="483" width="1" height="1" fill="#0000ff"/>
<rect x="642" y="486" width="1" height="1" fill="#0000ff"/>
<rect x="642" y="483" width="1" height="1" fill="#0000ff"/>
<rect x="643" y="486" width="1" height="1" fill="#0000ff"/>
<rect x="643" y="483" width="1" height="1" fill="#0000ff"/>
<rect x="644" y="486" width="1" height="1" fill="#0000ff"/>
<rect x="644" y="485" width="1" height="1" fill="#0000ff"/>
<rect x="644" y="484" width="1" height="1" fill="#0000ff"/>
<rect x="644" y="483" width="1" height="1" fill="#0000ff"/>
<rect x="645" y="486" width="1" height="1" fill="#0000ff"/>
<rect x="645" y="483" width="1" height="1" fill="#0000ff"/>
<rect x="646" y="486" width="1" height="1" fill="#0000ff"/>
<rect x="646" y="485" width="1" height="1" fill="#0000ff"/>
<rect x="646" y="484" width="1" height="1" fill="#0000ff"/>
<rect x="646" y="483" width="1" height="1" fill="#0000ff"/>
<rect x="646" y="481" width="1" height="1" fill="#0000ff"/>
<rect x="641" y="476" width="1" height="1" fill="#0000ff"/>
<rect x="642" y="477" width="1" height="1" fill="#0000ff"/>
<rect x="642" y="476" width="1" height="1" fill="#0000ff"/>
<rect x="643" y="478" width="1" height="1" fill="#0000ff"/>
<rect x="643" y="476" width="1" height="1" fill="#0000ff"/>
<rect x="644" y="479" width="1" height="1" fill="#0000ff"/>
<rect x="644" y="478" width="1" height="1" fill="#0000ff"/>
<rect x="644" y="477" width="1" height="1" fill="#0000ff"/>
<rect x="644" y="476" width="1" height="1" fill="#0000ff"/>
<rect x="645" y="476" width="1" height="1" fill="#0000ff"/>
<rect x="646" y="476" width="1" height="1" fill="#0000ff"/>
<rect x="641" y="471" width="1" height="1" fill="#0000ff"/>
<rect x="642" y="472" width="1" height="1" fill="#0000ff"/>
<rect x="642" y="471" width="1" height="1" fill="#0000ff"/>
<rect x="643" y="473" width="1" height="1" fill="#0000ff"/>
<rect x="643" y="471" width="1" height="1" fill="#0000ff"/>
<rect x="644" y="474" width="1" height="1" fill="#0000ff"/>
<rect x="644" y="473" width="1" height="1" fill="#0000ff"/>
<rect x="644" y="472" width="1" height="1" fill="#0000ff"/>
<rect x="644" y="471" width="1" height="1" fill="#0000ff"/>
<rect x="645" y="471" width="1" height="1" fill="#0000ff"/>
<rect x="646" y="471" width="1" height="1" fill="#0000ff"/>
<rect x="94" y="317" width="3" height="1" fill="#ffffff"/>
<rect x="99" y="317" width="4" height="1" fill="#ffffff"/>
<rect x="94" y="318" width="3" height="1" fill="#ffffff"/>
<rect x="98" y="318" width="2" height="1" fill="#ffffff"/>
<rect x="101" y="318" width="2" height="1" fill="#ffffff"/>
<rect x="94" y="319" width="3" height="1" fill="#ffffff"/>
<rect x="99" y="319" width="4" height="1" fill="#ffffff"/>
<rect x="94" y="320" width="3" height="1" fill="#ffffff"/>
<rect x="98" y="320" width="2" height="1" fill="#ffffff"/>
<rect x="101" y="320" width="2" height="1" fill="#ffffff"/>
<rect x="94" y="321" width="4" height="1" fill="#ffffff"/>
<rect x="99" y="321" width="4" height="1" fill="#ffffff"/>
<rect x="93" y="322" width="5" height="1" fill="#ffffff"/>
<rect x="99" y="322" width="4" height="1" fill="#ffffff"/>
<rect x="96" y="323" width="2" height="1" fill="#ffffff"/>
<rect x="99" y="323" width="1" height="1" fill="#ffffff"/>
<rect x="101" y="323" width="3" height="1" fill="#ffffff"/>
<rect x="92" y="324" width="3" height="1" fill="#ffffff"/>
<rect x="99" y="324" width="4" height="1" fill="#ffffff"/>
<rect x="98" y="354" width="1" height="8" fill="#ffffff"/>
<rect x="97" y="354" width="1" height="1" fill="#ffffff"/>
<rect x="96" y="355" width="1" height="1" fill="#ffffff"/>
<rect x="96" y="361" width="4" height="1" fill="#ffffff"/>
<rect x="91" y="392" width="1" height="1" fill="#ffffff"/>
<rect x="102" y="392" width="1" height="1" fill="#ffffff"/>
<rect x="104" y="392" width="1" height="1" fill="#ffffff"/>
<rect x="90" y="393" width="11" height="1" fill="#ffffff"/>
<rect x="102" y="393" width="3" height="1" fill="#ffffff"/>
<rect x="90" y="394" width="4" height="1" fill="#ffffff"/>
<rect x="96" y="394" width="1" height="1" fill="#ffffff"/>
<rect x="98" y="394" width="3" height="1" fill="#ffffff"/>
<rect x="102" y="394" width="3" height="1" fill="#ffffff"/>
<rect x="90" y="395" width="5" height="1" fill="#ffffff"/>
<rect x="96" y="395" width="10" height="1" fill="#ffffff"/>
<rect x="90" y="396" width="4" height="1" fill="#ffffff"/>
<rect x="96" y="396" width="7" height="1" fill="#ffffff"/>
<rect x="104" y="396" width="2" height="1" fill="#ffffff"/>
<rect x="90" y="397" width="4" height="1" fill="#ffffff"/>
<rect x="96" y="397" width="5" height="1" fill="#ffffff"/>
<rect x="102" y="397" width="3" height="1" fill="#ffffff"/>
<rect x="90" y="398" width="4" height="1" fill="#ffffff"/>
<rect x="96" y="398" width="5" height="1" fill="#ffffff"/>
<rect x="103" y="398" width="2" height="1" fill="#ffffff"/>
<rect x="90" y="399" width="1" height="1" fill="#ffffff"/>
<rect x="92" y="399" width="2" height="1" fill="#ffffff"/>
<rect x="96" y="399" width="2" height="1" fill="#ffffff"/>
<rect x="99" y="399" width="2" height="1" fill="#ffffff"/>
<rect x="103" y="399" width="1" height="1" fill="#ffffff"/>
<rect x="91" y="400" width="1" height="1" fill="#ffffff"/>
<rect x="93" y="400" width="1" height="1" fill="#ffffff"/>
<rect x="103" y="400" width="1" height="1" fill="#ffffff"/>
<rect x="93" y="430" width="1" height="1" fill="#ffffff"/>
<rect x="98" y="430" width="1" height="1" fill="#ffffff"/>
<rect x="103" y="430" width="3" height="1" fill="#ffffff"/>
<rect x="93" y="431" width="1" height="1" fill="#ffffff"/>
<rect x="96" y="431" width="1" height="1" fill="#ffffff"/>
<rect x="98" y="431" width="1" height="1" fill="#ffffff"/>
<rect x="101" y="431" width="4" height="1" fill="#ffffff"/>
<rect x="90" y="432" width="5" height="1" fill="#ffffff"/>
<rect x="96" y="432" width="4" height="1" fill="#ffffff"/>
<rect x="103" y="432" width="1" height="1" fill="#ffffff"/>
<rect x="105" y="432" width="1" height="1" fill="#ffffff"/>
<rect x="92" y="433" width="1" height="1" fill="#ffffff"/>
<rect x="94" y="433" width="1" height="1" fill="#ffffff"/>
<rect x="96" y="433" width="4" height="1" fill="#ffffff"/>
<rect x="101" y="433" width="5" height="1" fill="#ffffff"/>
<rect x="92" y="434" width="1" height="1" fill="#ffffff"/>
<rect x="94" y="434" width="1" height="1" fill="#ffffff"/>
<rect x="96" y="434" width="4" height="1" fill="#ffffff"/>
<rect x="103" y="434" width="1" height="1" fill="#ffffff"/>
<rect x="91" y="435" width="1" height="1" fill="#ffffff"/>
<rect x="93" y="435" width="1" height="1" fill="#ffffff"/>
<rect x="95" y="435" width="6" height="1" fill="#ffffff"/>
<rect x="103" y="435" width="1" height="1" fill="#ffffff"/>
<rect x="91" y="436" width="4" height="1" fill="#ffffff"/>
<rect x="97" y="436" width="4" height="1" fill="#ffffff"/>
<rect x="103" y="436" width="1" height="1" fill="#ffffff"/>
<rect x="90" y="437" width="5" height="1" fill="#ffffff"/>
<rect x="97" y="437" width="4" height="1" fill="#ffffff"/>
<rect x="103" y="437" width="1" height="1" fill="#ffffff"/>
<rect x="92" y="468" width="1" height="1" fill="#ffffff"/>
<rect x="96" y="468" width="1" height="1" fill="#ffffff"/>
<rect x="98" y="468" width="1" height="1" fill="#ffffff"/>
<rect x="101" y="468" width="5" height="1" fill="#ffffff"/>
<rect x="92" y="469" width="1" height="1" fill="#ffffff"/>
<rect x="96" y="469" width="3" height="1" fill="#ffffff"/>
<rect x="102" y="469" width="2" height="1" fill="#ffffff"/>
<rect x="105" y="469" width="1" height="1" fill="#ffffff"/>
<rect x="90" y="470" width="5" height="1" fill="#ffffff"/>
<rect x="96" y="470" width="4" height="1" fill="#ffffff"/>
<rect x="103" y="470" width="2" height="1" fill="#ffffff"/>
<rect x="91" y="471" width="3" height="1" fill="#ffffff"/>
<rect x="96" y="471" width="4" height="1" fill="#ffffff"/>
<rect x="101" y="471" width="5" height="1" fill="#ffffff"/>
<rect x="91" y="472" width="3" height="1" fill="#ffffff"/>
<rect x="96" y="472" width="5" height="1" fill="#ffffff"/>
<rect x="103" y="472" width="1" height="1" fill="#ffffff"/>
<rect x="91" y="473" width="1" height="1" fill="#ffffff"/>
<rect x="93" y="473" width="1" height="1" fill="#ffffff"/>
<rect x="96" y="473" width="5" height="1" fill="#ffffff"/>
<rect x="103" y="473" width="1" height="1" fill="#ffffff"/>
<rect x="90" y="474" width="4" height="1" fill="#ffffff"/>
<rect x="95" y="474" width="1" height="1" fill="#ffffff"/>
<rect x="97" y="474" width="1" height="1" fill="#ffffff"/>
<rect x="99" y="474" width="2" height="1" fill="#ffffff"/>
<rect x="103" y="474" width="1" height="1" fill="#ffffff"/>
<rect x="91" y="475" width="1" height="1" fill="#ffffff"/>
<rect x="98" y="475" width="3" height="1" fill="#ffffff"/>
<rect x="103" y="475" width="1" height="1" fill="#ffffff"/>
</svg>
<svg width="742" height="507" viewBox="0 0 742 507" style="position:absolute;left:0;top:0" shape-rendering="crispEdges"><defs><linearGradient id="fg" x1="0" y1="0" x2="0" y2="1"><stop offset="0" stop-color="#1c1f22"/><stop offset="0.12" stop-color="#202326"/><stop offset="0.55" stop-color="#3a3d40"/><stop offset="0.85" stop-color="#16181a"/><stop offset="1" stop-color="#08090b"/></linearGradient></defs>
<rect x="259.5" y="20.5" width="269" height="60" rx="6" ry="6" fill="url(#fg)" stroke="#858585" stroke-width="1" shape-rendering="geometricPrecision"/>
<path d="M263.5 75 V28 Q263.5 24.5 267 24.5 H523" fill="none" stroke="#999" stroke-width="1" shape-rendering="geometricPrecision"/>
<rect x="264" y="25" width="260" height="51" fill="#101010"/>
<rect x="265" y="26" width="258" height="49" fill="#ffffff"/>
<rect x="266" y="27" width="256" height="19" fill="#99b4d1"/>
<rect x="266" y="46" width="256" height="28" fill="#f0f0f0"/>
<rect x="503" y="29" width="17" height="15" fill="#696969"/>
<rect x="503" y="29" width="16" height="14" fill="#ffffff"/>
<rect x="504" y="30" width="15" height="13" fill="#a0a0a0"/>
<rect x="504" y="30" width="14" height="12" fill="#f0f0f0"/>
<rect x="507" y="32" width="1" height="1" fill="#000"/>
<rect x="508" y="32" width="1" height="1" fill="#000"/>
<rect x="513" y="32" width="1" height="1" fill="#000"/>
<rect x="514" y="32" width="1" height="1" fill="#000"/>
<rect x="508" y="33" width="1" height="1" fill="#000"/>
<rect x="509" y="33" width="1" height="1" fill="#000"/>
<rect x="512" y="33" width="1" height="1" fill="#000"/>
<rect x="513" y="33" width="1" height="1" fill="#000"/>
<rect x="509" y="34" width="1" height="1" fill="#000"/>
<rect x="510" y="34" width="1" height="1" fill="#000"/>
<rect x="511" y="34" width="1" height="1" fill="#000"/>
<rect x="512" y="34" width="1" height="1" fill="#000"/>
<rect x="510" y="35" width="1" height="1" fill="#000"/>
<rect x="511" y="35" width="1" height="1" fill="#000"/>
<rect x="509" y="36" width="1" height="1" fill="#000"/>
<rect x="510" y="36" width="1" height="1" fill="#000"/>
<rect x="511" y="36" width="1" height="1" fill="#000"/>
<rect x="512" y="36" width="1" height="1" fill="#000"/>
<rect x="508" y="37" width="1" height="1" fill="#000"/>
<rect x="509" y="37" width="1" height="1" fill="#000"/>
<rect x="512" y="37" width="1" height="1" fill="#000"/>
<rect x="513" y="37" width="1" height="1" fill="#000"/>
<rect x="507" y="38" width="1" height="1" fill="#000"/>
<rect x="508" y="38" width="1" height="1" fill="#000"/>
<rect x="513" y="38" width="1" height="1" fill="#000"/>
<rect x="514" y="38" width="1" height="1" fill="#000"/>
<rect x="269" y="30" width="1" height="1" fill="#0c0c0c"/>
<rect x="270" y="30" width="1" height="1" fill="#0c0c0c"/>
<rect x="271" y="30" width="1" height="1" fill="#0c0c0c"/>
<rect x="272" y="30" width="1" height="1" fill="#0c0c0c"/>
<rect x="273" y="30" width="1" height="1" fill="#0c0c0c"/>
<rect x="274" y="30" width="1" height="1" fill="#0c0c0c"/>
<rect x="275" y="30" width="1" height="1" fill="#0c0c0c"/>
<rect x="276" y="30" width="1" height="1" fill="#0c0c0c"/>
<rect x="277" y="30" width="1" height="1" fill="#0c0c0c"/>
<rect x="278" y="30" width="1" height="1" fill="#0c0c0c"/>
<rect x="270" y="32" width="1" height="1" fill="#0c0c0c"/>
<rect x="271" y="32" width="1" height="1" fill="#0c0c0c"/>
<rect x="272" y="32" width="1" height="1" fill="#0c0c0c"/>
<rect x="273" y="32" width="1" height="1" fill="#0c0c0c"/>
<rect x="274" y="32" width="1" height="1" fill="#0c0c0c"/>
<rect x="275" y="32" width="1" height="1" fill="#0c0c0c"/>
<rect x="276" y="32" width="1" height="1" fill="#0c0c0c"/>
<rect x="277" y="32" width="1" height="1" fill="#0c0c0c"/>
<rect x="278" y="32" width="1" height="1" fill="#0c0c0c"/>
<rect x="269" y="34" width="1" height="1" fill="#0c0c0c"/>
<rect x="270" y="34" width="1" height="1" fill="#0c0c0c"/>
<rect x="271" y="34" width="1" height="1" fill="#0c0c0c"/>
<rect x="272" y="34" width="1" height="1" fill="#0c0c0c"/>
<rect x="273" y="34" width="1" height="1" fill="#0c0c0c"/>
<rect x="274" y="34" width="1" height="1" fill="#0c0c0c"/>
<rect x="275" y="34" width="1" height="1" fill="#0c0c0c"/>
<rect x="276" y="34" width="1" height="1" fill="#0c0c0c"/>
<rect x="277" y="34" width="1" height="1" fill="#0c0c0c"/>
<rect x="278" y="34" width="1" height="1" fill="#0c0c0c"/>
<rect x="278" y="31" width="1" height="1" fill="#0c0c0c"/>
<rect x="278" y="33" width="1" height="1" fill="#0c0c0c"/>
<rect x="269" y="36" width="1" height="1" fill="#0c0c0c"/>
<rect x="270" y="37" width="1" height="1" fill="#0c0c0c"/>
<rect x="279" y="36" width="1" height="1" fill="#0c0c0c"/>
<rect x="278" y="37" width="1" height="1" fill="#0c0c0c"/>
<rect x="274" y="36" width="1" height="1" fill="#0c0c0c"/>
<rect x="274" y="37" width="1" height="1" fill="#0c0c0c"/>
<rect x="273" y="38" width="1" height="1" fill="#0c0c0c"/>
<rect x="272" y="39" width="1" height="1" fill="#0c0c0c"/>
<rect x="271" y="39" width="1" height="1" fill="#0c0c0c"/>
<rect x="270" y="40" width="1" height="1" fill="#0c0c0c"/>
<rect x="269" y="40" width="1" height="1" fill="#0c0c0c"/>
<rect x="268" y="40" width="1" height="1" fill="#0c0c0c"/>
<rect x="275" y="38" width="1" height="1" fill="#0c0c0c"/>
<rect x="276" y="39" width="1" height="1" fill="#0c0c0c"/>
<rect x="277" y="40" width="1" height="1" fill="#0c0c0c"/>
<rect x="278" y="40" width="1" height="1" fill="#0c0c0c"/>
<rect x="279" y="40" width="1" height="1" fill="#0c0c0c"/>
<rect x="286" y="30" width="1" height="1" fill="#0c0c0c"/>
<rect x="286" y="31" width="1" height="1" fill="#0c0c0c"/>
<rect x="281" y="32" width="1" height="1" fill="#0c0c0c"/>
<rect x="282" y="32" width="1" height="1" fill="#0c0c0c"/>
<rect x="283" y="32" width="1" height="1" fill="#0c0c0c"/>
<rect x="284" y="32" width="1" height="1" fill="#0c0c0c"/>
<rect x="285" y="32" width="1" height="1" fill="#0c0c0c"/>
<rect x="286" y="32" width="1" height="1" fill="#0c0c0c"/>
<rect x="287" y="32" width="1" height="1" fill="#0c0c0c"/>
<rect x="288" y="32" width="1" height="1" fill="#0c0c0c"/>
<rect x="289" y="32" width="1" height="1" fill="#0c0c0c"/>
<rect x="290" y="32" width="1" height="1" fill="#0c0c0c"/>
<rect x="281" y="33" width="1" height="1" fill="#0c0c0c"/>
<rect x="290" y="33" width="1" height="1" fill="#0c0c0c"/>
<rect x="282" y="34" width="1" height="1" fill="#0c0c0c"/>
<rect x="283" y="34" width="1" height="1" fill="#0c0c0c"/>
<rect x="284" y="34" width="1" height="1" fill="#0c0c0c"/>
<rect x="285" y="34" width="1" height="1" fill="#0c0c0c"/>
<rect x="286" y="34" width="1" height="1" fill="#0c0c0c"/>
<rect x="287" y="34" width="1" height="1" fill="#0c0c0c"/>
<rect x="288" y="34" width="1" height="1" fill="#0c0c0c"/>
<rect x="289" y="34" width="1" height="1" fill="#0c0c0c"/>
<rect x="290" y="34" width="1" height="1" fill="#0c0c0c"/>
<rect x="286" y="35" width="1" height="1" fill="#0c0c0c"/>
<rect x="286" y="36" width="1" height="1" fill="#0c0c0c"/>
<rect x="286" y="37" width="1" height="1" fill="#0c0c0c"/>
<rect x="286" y="38" width="1" height="1" fill="#0c0c0c"/>
<rect x="286" y="39" width="1" height="1" fill="#0c0c0c"/>
<rect x="280" y="37" width="1" height="1" fill="#0c0c0c"/>
<rect x="281" y="37" width="1" height="1" fill="#0c0c0c"/>
<rect x="282" y="37" width="1" height="1" fill="#0c0c0c"/>
<rect x="283" y="37" width="1" height="1" fill="#0c0c0c"/>
<rect x="284" y="37" width="1" height="1" fill="#0c0c0c"/>
<rect x="285" y="37" width="1" height="1" fill="#0c0c0c"/>
<rect x="286" y="37" width="1" height="1" fill="#0c0c0c"/>
<rect x="287" y="37" width="1" height="1" fill="#0c0c0c"/>
<rect x="288" y="37" width="1" height="1" fill="#0c0c0c"/>
<rect x="289" y="37" width="1" height="1" fill="#0c0c0c"/>
<rect x="290" y="37" width="1" height="1" fill="#0c0c0c"/>
<rect x="291" y="37" width="1" height="1" fill="#0c0c0c"/>
<rect x="283" y="40" width="1" height="1" fill="#0c0c0c"/>
<rect x="284" y="40" width="1" height="1" fill="#0c0c0c"/>
<rect x="285" y="40" width="1" height="1" fill="#0c0c0c"/>
<rect x="286" y="40" width="1" height="1" fill="#0c0c0c"/>
<rect x="292" y="30" width="1" height="1" fill="#0c0c0c"/>
<rect x="292" y="31" width="1" height="1" fill="#0c0c0c"/>
<rect x="292" y="32" width="1" height="1" fill="#0c0c0c"/>
<rect x="292" y="33" width="1" height="1" fill="#0c0c0c"/>
<rect x="292" y="34" width="1" height="1" fill="#0c0c0c"/>
<rect x="292" y="35" width="1" height="1" fill="#0c0c0c"/>
<rect x="292" y="36" width="1" height="1" fill="#0c0c0c"/>
<rect x="292" y="37" width="1" height="1" fill="#0c0c0c"/>
<rect x="292" y="38" width="1" height="1" fill="#0c0c0c"/>
<rect x="292" y="39" width="1" height="1" fill="#0c0c0c"/>
<rect x="293" y="39" width="1" height="1" fill="#0c0c0c"/>
<rect x="294" y="39" width="1" height="1" fill="#0c0c0c"/>
<rect x="295" y="39" width="1" height="1" fill="#0c0c0c"/>
<rect x="296" y="39" width="1" height="1" fill="#0c0c0c"/>
<rect x="297" y="39" width="1" height="1" fill="#0c0c0c"/>
<rect x="295" y="30" width="1" height="1" fill="#0c0c0c"/>
<rect x="295" y="31" width="1" height="1" fill="#0c0c0c"/>
<rect x="295" y="32" width="1" height="1" fill="#0c0c0c"/>
<rect x="295" y="33" width="1" height="1" fill="#0c0c0c"/>
<rect x="295" y="34" width="1" height="1" fill="#0c0c0c"/>
<rect x="295" y="35" width="1" height="1" fill="#0c0c0c"/>
<rect x="295" y="36" width="1" height="1" fill="#0c0c0c"/>
<rect x="295" y="37" width="1" height="1" fill="#0c0c0c"/>
<rect x="295" y="38" width="1" height="1" fill="#0c0c0c"/>
<rect x="293" y="34" width="1" height="1" fill="#0c0c0c"/>
<rect x="294" y="34" width="1" height="1" fill="#0c0c0c"/>
<rect x="295" y="34" width="1" height="1" fill="#0c0c0c"/>
<rect x="296" y="34" width="1" height="1" fill="#0c0c0c"/>
<rect x="297" y="34" width="1" height="1" fill="#0c0c0c"/>
<rect x="293" y="31" width="1" height="1" fill="#0c0c0c"/>
<rect x="297" y="31" width="1" height="1" fill="#0c0c0c"/>
<rect x="294" y="32" width="1" height="1" fill="#0c0c0c"/>
<rect x="296" y="32" width="1" height="1" fill="#0c0c0c"/>
<rect x="294" y="36" width="1" height="1" fill="#0c0c0c"/>
<rect x="293" y="37" width="1" height="1" fill="#0c0c0c"/>
<rect x="296" y="36" width="1" height="1" fill="#0c0c0c"/>
<rect x="297" y="37" width="1" height="1" fill="#0c0c0c"/>
<rect x="303" y="30" width="1" height="1" fill="#0c0c0c"/>
<rect x="304" y="30" width="1" height="1" fill="#0c0c0c"/>
<rect x="300" y="31" width="1" height="1" fill="#0c0c0c"/>
<rect x="301" y="31" width="1" height="1" fill="#0c0c0c"/>
<rect x="302" y="31" width="1" height="1" fill="#0c0c0c"/>
<rect x="299" y="32" width="1" height="1" fill="#0c0c0c"/>
<rect x="299" y="33" width="1" height="1" fill="#0c0c0c"/>
<rect x="299" y="34" width="1" height="1" fill="#0c0c0c"/>
<rect x="299" y="35" width="1" height="1" fill="#0c0c0c"/>
<rect x="299" y="36" width="1" height="1" fill="#0c0c0c"/>
<rect x="299" y="37" width="1" height="1" fill="#0c0c0c"/>
<rect x="299" y="38" width="1" height="1" fill="#0c0c0c"/>
<rect x="299" y="39" width="1" height="1" fill="#0c0c0c"/>
<rect x="299" y="40" width="1" height="1" fill="#0c0c0c"/>
<rect x="300" y="34" width="1" height="1" fill="#0c0c0c"/>
<rect x="301" y="34" width="1" height="1" fill="#0c0c0c"/>
<rect x="302" y="34" width="1" height="1" fill="#0c0c0c"/>
<rect x="303" y="34" width="1" height="1" fill="#0c0c0c"/>
<rect x="304" y="34" width="1" height="1" fill="#0c0c0c"/>
<rect x="301" y="35" width="1" height="1" fill="#0c0c0c"/>
<rect x="301" y="36" width="1" height="1" fill="#0c0c0c"/>
<rect x="301" y="37" width="1" height="1" fill="#0c0c0c"/>
<rect x="301" y="38" width="1" height="1" fill="#0c0c0c"/>
<rect x="301" y="39" width="1" height="1" fill="#0c0c0c"/>
<rect x="301" y="40" width="1" height="1" fill="#0c0c0c"/>
<rect x="301" y="41" width="1" height="1" fill="#0c0c0c"/>
<rect x="304" y="30" width="1" height="1" fill="#0c0c0c"/>
<rect x="305" y="30" width="1" height="1" fill="#0c0c0c"/>
<rect x="306" y="30" width="1" height="1" fill="#0c0c0c"/>
<rect x="307" y="30" width="1" height="1" fill="#0c0c0c"/>
<rect x="308" y="30" width="1" height="1" fill="#0c0c0c"/>
<rect x="309" y="30" width="1" height="1" fill="#0c0c0c"/>
<rect x="310" y="30" width="1" height="1" fill="#0c0c0c"/>
<rect x="311" y="30" width="1" height="1" fill="#0c0c0c"/>
<rect x="312" y="30" width="1" height="1" fill="#0c0c0c"/>
<rect x="313" y="30" width="1" height="1" fill="#0c0c0c"/>
<rect x="314" y="30" width="1" height="1" fill="#0c0c0c"/>
<rect x="315" y="30" width="1" height="1" fill="#0c0c0c"/>
<rect x="309" y="31" width="1" height="1" fill="#0c0c0c"/>
<rect x="305" y="32" width="1" height="1" fill="#0c0c0c"/>
<rect x="306" y="32" width="1" height="1" fill="#0c0c0c"/>
<rect x="307" y="32" width="1" height="1" fill="#0c0c0c"/>
<rect x="308" y="32" width="1" height="1" fill="#0c0c0c"/>
<rect x="309" y="32" width="1" height="1" fill="#0c0c0c"/>
<rect x="310" y="32" width="1" height="1" fill="#0c0c0c"/>
<rect x="311" y="32" width="1" height="1" fill="#0c0c0c"/>
<rect x="312" y="32" width="1" height="1" fill="#0c0c0c"/>
<rect x="313" y="32" width="1" height="1" fill="#0c0c0c"/>
<rect x="314" y="32" width="1" height="1" fill="#0c0c0c"/>
<rect x="305" y="39" width="1" height="1" fill="#0c0c0c"/>
<rect x="306" y="39" width="1" height="1" fill="#0c0c0c"/>
<rect x="307" y="39" width="1" height="1" fill="#0c0c0c"/>
<rect x="308" y="39" width="1" height="1" fill="#0c0c0c"/>
<rect x="309" y="39" width="1" height="1" fill="#0c0c0c"/>
<rect x="310" y="39" width="1" height="1" fill="#0c0c0c"/>
<rect x="311" y="39" width="1" height="1" fill="#0c0c0c"/>
<rect x="312" y="39" width="1" height="1" fill="#0c0c0c"/>
<rect x="313" y="39" width="1" height="1" fill="#0c0c0c"/>
<rect x="314" y="39" width="1" height="1" fill="#0c0c0c"/>
<rect x="305" y="33" width="1" height="1" fill="#0c0c0c"/>
<rect x="305" y="34" width="1" height="1" fill="#0c0c0c"/>
<rect x="305" y="35" width="1" height="1" fill="#0c0c0c"/>
<rect x="305" y="36" width="1" height="1" fill="#0c0c0c"/>
<rect x="305" y="37" width="1" height="1" fill="#0c0c0c"/>
<rect x="305" y="38" width="1" height="1" fill="#0c0c0c"/>
<rect x="305" y="39" width="1" height="1" fill="#0c0c0c"/>
<rect x="305" y="40" width="1" height="1" fill="#0c0c0c"/>
<rect x="314" y="33" width="1" height="1" fill="#0c0c0c"/>
<rect x="314" y="34" width="1" height="1" fill="#0c0c0c"/>
<rect x="314" y="35" width="1" height="1" fill="#0c0c0c"/>
<rect x="314" y="36" width="1" height="1" fill="#0c0c0c"/>
<rect x="314" y="37" width="1" height="1" fill="#0c0c0c"/>
<rect x="314" y="38" width="1" height="1" fill="#0c0c0c"/>
<rect x="314" y="39" width="1" height="1" fill="#0c0c0c"/>
<rect x="314" y="40" width="1" height="1" fill="#0c0c0c"/>
<rect x="308" y="33" width="1" height="1" fill="#0c0c0c"/>
<rect x="308" y="34" width="1" height="1" fill="#0c0c0c"/>
<rect x="308" y="35" width="1" height="1" fill="#0c0c0c"/>
<rect x="308" y="36" width="1" height="1" fill="#0c0c0c"/>
<rect x="308" y="37" width="1" height="1" fill="#0c0c0c"/>
<rect x="308" y="38" width="1" height="1" fill="#0c0c0c"/>
<rect x="311" y="33" width="1" height="1" fill="#0c0c0c"/>
<rect x="311" y="34" width="1" height="1" fill="#0c0c0c"/>
<rect x="311" y="35" width="1" height="1" fill="#0c0c0c"/>
<rect x="311" y="36" width="1" height="1" fill="#0c0c0c"/>
<rect x="311" y="37" width="1" height="1" fill="#0c0c0c"/>
<rect x="311" y="38" width="1" height="1" fill="#0c0c0c"/>
<rect x="309" y="34" width="1" height="1" fill="#0c0c0c"/>
<rect x="310" y="34" width="1" height="1" fill="#0c0c0c"/>
<rect x="309" y="37" width="1" height="1" fill="#0c0c0c"/>
<rect x="310" y="37" width="1" height="1" fill="#0c0c0c"/>
<rect x="270" y="52" width="16" height="16" fill="#2f5f98"/>
<rect x="271" y="53" width="2" height="2" fill="#f6ecd6"/>
<rect x="271" y="56" width="2" height="2" fill="#f6ecd6"/>
<rect x="271" y="59" width="2" height="2" fill="#f6ecd6"/>
<rect x="271" y="62" width="2" height="2" fill="#f6ecd6"/>
<rect x="271" y="65" width="2" height="2" fill="#f6ecd6"/>
<rect x="274" y="53" width="2" height="2" fill="#f6ecd6"/>
<rect x="274" y="56" width="2" height="2" fill="#f6ecd6"/>
<rect x="274" y="59" width="2" height="2" fill="#f6ecd6"/>
<rect x="274" y="62" width="2" height="2" fill="#f6ecd6"/>
<rect x="274" y="65" width="2" height="2" fill="#f6ecd6"/>
<rect x="277" y="53" width="2" height="2" fill="#f6ecd6"/>
<rect x="277" y="56" width="2" height="2" fill="#f6ecd6"/>
<rect x="277" y="59" width="2" height="2" fill="#f6ecd6"/>
<rect x="277" y="62" width="2" height="2" fill="#f6ecd6"/>
<rect x="277" y="65" width="2" height="2" fill="#f6ecd6"/>
<rect x="280" y="53" width="2" height="2" fill="#f6ecd6"/>
<rect x="280" y="56" width="2" height="2" fill="#f6ecd6"/>
<rect x="280" y="59" width="2" height="2" fill="#f6ecd6"/>
<rect x="280" y="62" width="2" height="2" fill="#f6ecd6"/>
<rect x="280" y="65" width="2" height="2" fill="#f6ecd6"/>
<rect x="283" y="53" width="2" height="2" fill="#f6ecd6"/>
<rect x="283" y="56" width="2" height="2" fill="#f6ecd6"/>
<rect x="283" y="59" width="2" height="2" fill="#f6ecd6"/>
<rect x="283" y="62" width="2" height="2" fill="#f6ecd6"/>
<rect x="283" y="65" width="2" height="2" fill="#f6ecd6"/>
<rect x="270" y="52" width="2" height="1" fill="#ff0000"/>
<rect x="270" y="55" width="2" height="1" fill="#ff0000"/>
<rect x="270" y="58" width="2" height="1" fill="#ff0000"/>
<rect x="275" y="54" width="3" height="1" fill="#ff0000"/>
<rect x="276" y="55" width="1" height="1" fill="#ff0000"/>
<rect x="275" y="56" width="1" height="1" fill="#ff0000"/>
<rect x="274" y="57" width="1" height="1" fill="#ff0000"/>
<rect x="273" y="58" width="1" height="3" fill="#ff0000"/>
<rect x="277" y="56" width="1" height="3" fill="#ff0000"/>
<rect x="277" y="59" width="4" height="1" fill="#ff0000"/>
<rect x="281" y="60" width="1" height="1" fill="#ff0000"/>
<rect x="282" y="61" width="1" height="1" fill="#ff0000"/>
<rect x="283" y="62" width="1" height="1" fill="#ff0000"/>
<rect x="284" y="63" width="1" height="1" fill="#ff0000"/>
<rect x="270" y="61" width="3" height="1" fill="#ff0000"/>
<rect x="272" y="62" width="1" height="1" fill="#ff0000"/>
<rect x="271" y="63" width="1" height="1" fill="#ff0000"/>
<rect x="270" y="64" width="1" height="1" fill="#ff0000"/>
<rect x="271" y="65" width="1" height="1" fill="#ff0000"/>
<rect x="270" y="66" width="2" height="2" fill="#ff0000"/>
<rect x="273" y="66" width="1" height="2" fill="#ff0000"/>
<rect x="276" y="66" width="1" height="2" fill="#ff0000"/>
<rect x="279" y="66" width="1" height="2" fill="#ff0000"/>
<rect x="282" y="66" width="1" height="2" fill="#ff0000"/>
<rect x="285" y="66" width="1" height="2" fill="#ff0000"/>
<rect x="293" y="52" width="16" height="16" fill="#fbf5e4"/>
<rect x="293" y="53" width="16" height="14" fill="#000"/>
<rect x="294" y="54" width="14" height="12" fill="#fbf5e4"/>
<rect x="296" y="55" width="11" height="10" fill="#000"/>
<rect x="297" y="56" width="9" height="8" fill="#fbf5e4"/>
<rect x="298" y="57" width="7" height="6" fill="#867e86"/>
<rect x="298" y="61" width="1" height="1" fill="#00ff00"/>
<rect x="299" y="59" width="1" height="2" fill="#00ff00"/>
<rect x="300" y="58" width="3" height="1" fill="#00ff00"/>
<rect x="303" y="59" width="1" height="2" fill="#00ff00"/>
<rect x="304" y="61" width="1" height="1" fill="#00ff00"/>
<rect x="318" y="52" width="14" height="11" fill="#d6cfc6"/>
<rect x="316" y="52" width="2" height="11" fill="#2f5f98"/>
<rect x="316" y="52" width="1" height="1" fill="#f6ecd6"/>
<rect x="316" y="55" width="1" height="1" fill="#f6ecd6"/>
<rect x="316" y="58" width="1" height="1" fill="#f6ecd6"/>
<rect x="316" y="61" width="1" height="1" fill="#f6ecd6"/>
<rect x="316" y="63" width="16" height="5" fill="#2f5f98"/>
<rect x="317" y="64" width="2" height="1" fill="#f6ecd6"/>
<rect x="317" y="66" width="2" height="1" fill="#f6ecd6"/>
<rect x="320" y="64" width="2" height="1" fill="#f6ecd6"/>
<rect x="320" y="66" width="2" height="1" fill="#f6ecd6"/>
<rect x="323" y="64" width="2" height="1" fill="#f6ecd6"/>
<rect x="323" y="66" width="2" height="1" fill="#f6ecd6"/>
<rect x="326" y="64" width="2" height="1" fill="#f6ecd6"/>
<rect x="326" y="66" width="2" height="1" fill="#f6ecd6"/>
<rect x="329" y="64" width="2" height="1" fill="#f6ecd6"/>
<rect x="329" y="66" width="2" height="1" fill="#f6ecd6"/>
<rect x="318" y="56" width="1" height="1" fill="#00ffff"/>
<rect x="319" y="57" width="1" height="1" fill="#00ffff"/>
<rect x="320" y="58" width="1" height="1" fill="#00ffff"/>
<rect x="321" y="59" width="1" height="1" fill="#00ffff"/>
<rect x="322" y="60" width="1" height="2" fill="#00ffff"/>
<rect x="323" y="61" width="2" height="1" fill="#00ffff"/>
<rect x="325" y="58" width="1" height="3" fill="#00ffff"/>
<rect x="326" y="56" width="1" height="2" fill="#00ffff"/>
<rect x="327" y="55" width="2" height="1" fill="#00ffff"/>
<rect x="329" y="54" width="3" height="1" fill="#00ffff"/>
<rect x="318" y="57" width="1" height="1" fill="#ff0000"/>
<rect x="319" y="56" width="1" height="1" fill="#ff0000"/>
<rect x="320" y="55" width="3" height="1" fill="#ff0000"/>
<rect x="323" y="56" width="1" height="2" fill="#ff0000"/>
<rect x="324" y="58" width="1" height="1" fill="#ff0000"/>
<rect x="325" y="59" width="4" height="1" fill="#ff0000"/>
<rect x="329" y="58" width="1" height="1" fill="#ff0000"/>
<rect x="330" y="57" width="1" height="1" fill="#ff0000"/>
<rect x="331" y="56" width="1" height="1" fill="#ff0000"/>
<rect x="339" y="52" width="16" height="16" fill="#ece9d8"/>
<rect x="340" y="65" width="1" height="1" fill="#000"/>
<rect x="341" y="65" width="1" height="1" fill="#000"/>
<rect x="339" y="66" width="1" height="1" fill="#000"/>
<rect x="341" y="66" width="1" height="1" fill="#000"/>
<rect x="339" y="67" width="1" height="1" fill="#000"/>
<rect x="340" y="67" width="1" height="1" fill="#000"/>
<rect x="339" y="61" width="1" height="1" fill="#000"/>
<rect x="340" y="61" width="1" height="1" fill="#000"/>
<rect x="339" y="62" width="1" height="1" fill="#000"/>
<rect x="341" y="62" width="1" height="1" fill="#000"/>
<rect x="340" y="63" width="1" height="1" fill="#000"/>
<rect x="341" y="63" width="1" height="1" fill="#000"/>
<rect x="342" y="59" width="1" height="1" fill="#000"/>
<rect x="343" y="59" width="1" height="1" fill="#000"/>
<rect x="342" y="60" width="1" height="1" fill="#000"/>
<rect x="343" y="60" width="1" height="1" fill="#000"/>
<rect x="344" y="56" width="1" height="1" fill="#000"/>
<rect x="345" y="56" width="1" height="1" fill="#000"/>
<rect x="344" y="57" width="1" height="1" fill="#000"/>
<rect x="346" y="57" width="1" height="1" fill="#000"/>
<rect x="345" y="58" width="1" height="1" fill="#000"/>
<rect x="346" y="58" width="1" height="1" fill="#000"/>
<rect x="346" y="54" width="1" height="1" fill="#000"/>
<rect x="347" y="55" width="1" height="1" fill="#000"/>
<rect x="348" y="52" width="1" height="1" fill="#000"/>
<rect x="349" y="52" width="1" height="1" fill="#000"/>
<rect x="348" y="53" width="1" height="1" fill="#000"/>
<rect x="350" y="53" width="1" height="1" fill="#000"/>
<rect x="349" y="54" width="1" height="1" fill="#000"/>
<rect x="350" y="54" width="1" height="1" fill="#000"/>
<rect x="342" y="64" width="1" height="1" fill="#000"/>
<rect x="343" y="63" width="1" height="1" fill="#000"/>
<rect x="344" y="62" width="1" height="1" fill="#000"/>
<rect x="345" y="61" width="1" height="1" fill="#000"/>
<rect x="346" y="60" width="1" height="1" fill="#000"/>
<rect x="347" y="59" width="1" height="1" fill="#000"/>
<rect x="348" y="58" width="1" height="1" fill="#000"/>
<rect x="349" y="57" width="1" height="1" fill="#000"/>
<rect x="350" y="56" width="1" height="1" fill="#000"/>
<rect x="351" y="55" width="1" height="1" fill="#000"/>
<rect x="352" y="54" width="1" height="1" fill="#000"/>
<rect x="353" y="53" width="1" height="1" fill="#000"/>
<rect x="354" y="52" width="1" height="1" fill="#000"/>
<rect x="362" y="52" width="16" height="16" fill="#ece9d8"/>
<rect x="363" y="63" width="2" height="2" fill="#ff0000"/>
<rect x="368" y="55" width="1" height="1" fill="#ff0000"/>
<rect x="369" y="55" width="1" height="1" fill="#ff0000"/>
<rect x="370" y="55" width="1" height="1" fill="#ff0000"/>
<rect x="371" y="55" width="1" height="1" fill="#ff0000"/>
<rect x="367" y="56" width="1" height="1" fill="#ff0000"/>
<rect x="368" y="56" width="1" height="1" fill="#ff0000"/>
<rect x="371" y="56" width="1" height="1" fill="#ff0000"/>
<rect x="372" y="56" width="1" height="1" fill="#ff0000"/>
<rect x="367" y="57" width="1" height="1" fill="#ff0000"/>
<rect x="368" y="57" width="1" height="1" fill="#ff0000"/>
<rect x="371" y="57" width="1" height="1" fill="#ff0000"/>
<rect x="372" y="57" width="1" height="1" fill="#ff0000"/>
<rect x="367" y="58" width="1" height="1" fill="#ff0000"/>
<rect x="368" y="58" width="1" height="1" fill="#ff0000"/>
<rect x="371" y="58" width="1" height="1" fill="#ff0000"/>
<rect x="372" y="58" width="1" height="1" fill="#ff0000"/>
<rect x="367" y="59" width="1" height="1" fill="#ff0000"/>
<rect x="368" y="59" width="1" height="1" fill="#ff0000"/>
<rect x="371" y="59" width="1" height="1" fill="#ff0000"/>
<rect x="372" y="59" width="1" height="1" fill="#ff0000"/>
<rect x="368" y="60" width="1" height="1" fill="#ff0000"/>
<rect x="369" y="60" width="1" height="1" fill="#ff0000"/>
<rect x="370" y="60" width="1" height="1" fill="#ff0000"/>
<rect x="371" y="60" width="1" height="1" fill="#ff0000"/>
<rect x="372" y="60" width="1" height="1" fill="#ff0000"/>
<rect x="371" y="61" width="1" height="1" fill="#ff0000"/>
<rect x="372" y="61" width="1" height="1" fill="#ff0000"/>
<rect x="367" y="62" width="1" height="1" fill="#ff0000"/>
<rect x="368" y="62" width="1" height="1" fill="#ff0000"/>
<rect x="371" y="62" width="1" height="1" fill="#ff0000"/>
<rect x="372" y="62" width="1" height="1" fill="#ff0000"/>
<rect x="367" y="63" width="1" height="1" fill="#ff0000"/>
<rect x="368" y="63" width="1" height="1" fill="#ff0000"/>
<rect x="369" y="63" width="1" height="1" fill="#ff0000"/>
<rect x="370" y="63" width="1" height="1" fill="#ff0000"/>
<rect x="371" y="63" width="1" height="1" fill="#ff0000"/>
<rect x="372" y="63" width="1" height="1" fill="#ff0000"/>
<rect x="368" y="64" width="1" height="1" fill="#ff0000"/>
<rect x="369" y="64" width="1" height="1" fill="#ff0000"/>
<rect x="370" y="64" width="1" height="1" fill="#ff0000"/>
<rect x="371" y="64" width="1" height="1" fill="#ff0000"/>
<rect x="374" y="64" width="1" height="1" fill="#ff0000"/>
<rect x="376" y="55" width="1" height="10" fill="#ff0000"/>
<rect x="375" y="56" width="1" height="1" fill="#ff0000"/>
<rect x="385" y="52" width="16" height="16" fill="#ece9d8"/>
<rect x="393" y="52" width="1" height="1" fill="#7c7c7c"/>
<rect x="391" y="53" width="1" height="1" fill="#7c7c7c"/>
<rect x="392" y="53" width="1" height="1" fill="#7c7c7c"/>
<rect x="387" y="54" width="1" height="1" fill="#7c7c7c"/>
<rect x="388" y="54" width="1" height="1" fill="#7c7c7c"/>
<rect x="387" y="55" width="1" height="1" fill="#7c7c7c"/>
<rect x="388" y="56" width="1" height="1" fill="#7c7c7c"/>
<rect x="388" y="57" width="1" height="1" fill="#7c7c7c"/>
<rect x="389" y="58" width="1" height="1" fill="#7c7c7c"/>
<rect x="389" y="59" width="1" height="1" fill="#7c7c7c"/>
<rect x="390" y="60" width="1" height="1" fill="#7c7c7c"/>
<rect x="390" y="61" width="1" height="1" fill="#7c7c7c"/>
<rect x="391" y="62" width="1" height="1" fill="#7c7c7c"/>
<rect x="391" y="63" width="1" height="1" fill="#7c7c7c"/>
<rect x="392" y="64" width="1" height="1" fill="#7c7c7c"/>
<rect x="392" y="65" width="1" height="1" fill="#7c7c7c"/>
<rect x="392" y="66" width="1" height="1" fill="#7c7c7c"/>
<rect x="393" y="66" width="1" height="1" fill="#7c7c7c"/>
<rect x="394" y="53" width="1" height="1" fill="#7c7c7c"/>
<rect x="395" y="54" width="1" height="1" fill="#7c7c7c"/>
<rect x="395" y="55" width="1" height="1" fill="#7c7c7c"/>
<rect x="396" y="56" width="1" height="1" fill="#7c7c7c"/>
<rect x="396" y="57" width="1" height="1" fill="#7c7c7c"/>
<rect x="397" y="59" width="1" height="1" fill="#7c7c7c"/>
<rect x="397" y="60" width="1" height="1" fill="#7c7c7c"/>
<rect x="398" y="61" width="1" height="1" fill="#7c7c7c"/>
<rect x="398" y="62" width="1" height="1" fill="#7c7c7c"/>
<rect x="399" y="63" width="1" height="1" fill="#7c7c7c"/>
<rect x="398" y="64" width="1" height="1" fill="#7c7c7c"/>
<rect x="397" y="65" width="1" height="1" fill="#7c7c7c"/>
<rect x="396" y="65" width="1" height="1" fill="#7c7c7c"/>
<rect x="390" y="52" width="1" height="1" fill="#000"/>
<rect x="391" y="54" width="1" height="1" fill="#000"/>
<rect x="391" y="55" width="1" height="1" fill="#000"/>
<rect x="392" y="56" width="1" height="1" fill="#000"/>
<rect x="392" y="57" width="1" height="1" fill="#000"/>
<rect x="391" y="58" width="1" height="1" fill="#000"/>
<rect x="392" y="58" width="1" height="1" fill="#000"/>
<rect x="393" y="58" width="1" height="1" fill="#000"/>
<rect x="392" y="59" width="1" height="1" fill="#000"/>
<rect x="393" y="59" width="1" height="1" fill="#000"/>
<rect x="393" y="60" width="1" height="1" fill="#000"/>
<rect x="394" y="61" width="1" height="1" fill="#000"/>
<rect x="394" y="62" width="1" height="1" fill="#000"/>
<rect x="394" y="63" width="1" height="1" fill="#000"/>
<rect x="395" y="64" width="1" height="1" fill="#000"/>
<rect x="396" y="66" width="1" height="1" fill="#000"/>
<rect x="396" y="67" width="1" height="1" fill="#000"/>
<rect x="389" y="54" width="1" height="1" fill="#ff0000"/>
<rect x="390" y="55" width="1" height="1" fill="#ff0000"/>
<rect x="392" y="55" width="1" height="1" fill="#ff0000"/>
<rect x="394" y="56" width="1" height="1" fill="#ff0000"/>
<rect x="394" y="59" width="1" height="1" fill="#ff0000"/>
<rect x="393" y="62" width="1" height="1" fill="#ff0000"/>
<rect x="393" y="64" width="1" height="1" fill="#ff0000"/>
<rect x="394" y="65" width="1" height="1" fill="#ff0000"/>
<rect x="408" y="52" width="16" height="16" fill="#ece9d8"/>
<rect x="410" y="54" width="1" height="1" fill="#000"/>
<rect x="409" y="55" width="1" height="1" fill="#000"/>
<rect x="409" y="56" width="1" height="1" fill="#000"/>
<rect x="411" y="56" width="1" height="1" fill="#000"/>
<rect x="409" y="57" width="1" height="1" fill="#000"/>
<rect x="410" y="57" width="1" height="1" fill="#000"/>
<rect x="411" y="57" width="1" height="1" fill="#000"/>
<rect x="409" y="58" width="1" height="1" fill="#000"/>
<rect x="412" y="58" width="1" height="1" fill="#000"/>
<rect x="408" y="59" width="1" height="1" fill="#000"/>
<rect x="409" y="59" width="1" height="1" fill="#000"/>
<rect x="414" y="54" width="1" height="1" fill="#000"/>
<rect x="415" y="54" width="1" height="1" fill="#000"/>
<rect x="415" y="55" width="1" height="1" fill="#000"/>
<rect x="415" y="56" width="1" height="1" fill="#000"/>
<rect x="415" y="57" width="1" height="1" fill="#000"/>
<rect x="415" y="58" width="1" height="1" fill="#000"/>
<rect x="412" y="59" width="1" height="1" fill="#000"/>
<rect x="413" y="59" width="1" height="1" fill="#000"/>
<rect x="414" y="59" width="1" height="1" fill="#000"/>
<rect x="415" y="59" width="1" height="1" fill="#000"/>
<rect x="416" y="59" width="1" height="1" fill="#000"/>
<rect x="412" y="63" width="1" height="1" fill="#000"/>
<rect x="413" y="63" width="1" height="1" fill="#000"/>
<rect x="415" y="63" width="1" height="1" fill="#000"/>
<rect x="416" y="63" width="1" height="1" fill="#000"/>
<rect x="414" y="61" width="1" height="1" fill="#000"/>
<rect x="414" y="62" width="1" height="1" fill="#000"/>
<rect x="414" y="63" width="1" height="1" fill="#000"/>
<rect x="414" y="64" width="1" height="1" fill="#000"/>
<rect x="414" y="65" width="1" height="1" fill="#000"/>
<rect x="409" y="61" width="1" height="1" fill="#000"/>
<rect x="408" y="62" width="1" height="1" fill="#000"/>
<rect x="408" y="63" width="1" height="1" fill="#000"/>
<rect x="408" y="64" width="1" height="1" fill="#000"/>
<rect x="408" y="65" width="1" height="1" fill="#000"/>
<rect x="410" y="62" width="1" height="1" fill="#000"/>
<rect x="410" y="63" width="1" height="1" fill="#000"/>
<rect x="410" y="64" width="1" height="1" fill="#000"/>
<rect x="410" y="65" width="1" height="1" fill="#000"/>
<rect x="409" y="66" width="1" height="1" fill="#000"/>
<rect x="418" y="61" width="1" height="1" fill="#000"/>
<rect x="417" y="62" width="1" height="1" fill="#000"/>
<rect x="417" y="63" width="1" height="1" fill="#000"/>
<rect x="417" y="64" width="1" height="1" fill="#000"/>
<rect x="417" y="65" width="1" height="1" fill="#000"/>
<rect x="419" y="62" width="1" height="1" fill="#000"/>
<rect x="419" y="63" width="1" height="1" fill="#000"/>
<rect x="419" y="64" width="1" height="1" fill="#000"/>
<rect x="419" y="65" width="1" height="1" fill="#000"/>
<rect x="418" y="66" width="1" height="1" fill="#000"/>
<rect x="422" y="61" width="1" height="1" fill="#000"/>
<rect x="421" y="62" width="1" height="1" fill="#000"/>
<rect x="421" y="63" width="1" height="1" fill="#000"/>
<rect x="421" y="64" width="1" height="1" fill="#000"/>
<rect x="421" y="65" width="1" height="1" fill="#000"/>
<rect x="423" y="62" width="1" height="1" fill="#000"/>
<rect x="423" y="63" width="1" height="1" fill="#000"/>
<rect x="423" y="64" width="1" height="1" fill="#000"/>
<rect x="423" y="65" width="1" height="1" fill="#000"/>
<rect x="422" y="66" width="1" height="1" fill="#000"/>
<rect x="418" y="57" width="1" height="1" fill="#ff0000"/>
<rect x="419" y="57" width="1" height="1" fill="#ff0000"/>
<rect x="420" y="57" width="1" height="1" fill="#ff0000"/>
<rect x="421" y="57" width="1" height="1" fill="#ff0000"/>
<rect x="422" y="57" width="1" height="1" fill="#ff0000"/>
<rect x="420" y="55" width="1" height="1" fill="#ff0000"/>
<rect x="421" y="56" width="1" height="1" fill="#ff0000"/>
<rect x="421" y="58" width="1" height="1" fill="#ff0000"/>
<rect x="420" y="59" width="1" height="1" fill="#ff0000"/>
<rect x="431" y="52" width="16" height="16" fill="#ece9d8"/>
<rect x="432" y="62" width="1" height="1" fill="#000"/>
<rect x="433" y="61" width="1" height="1" fill="#000"/>
<rect x="434" y="60" width="1" height="1" fill="#000"/>
<rect x="435" y="59" width="1" height="1" fill="#000"/>
<rect x="436" y="58" width="1" height="1" fill="#000"/>
<rect x="437" y="57" width="1" height="1" fill="#000"/>
<rect x="438" y="56" width="1" height="1" fill="#000"/>
<rect x="439" y="55" width="1" height="1" fill="#000"/>
<rect x="440" y="54" width="1" height="1" fill="#000"/>
<rect x="441" y="53" width="1" height="1" fill="#000"/>
<rect x="438" y="53" width="1" height="1" fill="#000"/>
<rect x="439" y="53" width="1" height="1" fill="#000"/>
<rect x="438" y="54" width="1" height="1" fill="#000"/>
<rect x="437" y="66" width="1" height="1" fill="#000"/>
<rect x="438" y="65" width="1" height="1" fill="#000"/>
<rect x="439" y="64" width="1" height="1" fill="#000"/>
<rect x="440" y="63" width="1" height="1" fill="#000"/>
<rect x="444" y="58" width="1" height="1" fill="#000"/>
<rect x="443" y="59" width="1" height="1" fill="#000"/>
<rect x="444" y="59" width="1" height="1" fill="#000"/>
<rect x="445" y="59" width="1" height="1" fill="#000"/>
<rect x="443" y="60" width="1" height="1" fill="#000"/>
<rect x="444" y="60" width="1" height="1" fill="#000"/>
<rect x="443" y="61" width="1" height="1" fill="#000"/>
<rect x="446" y="58" width="1" height="1" fill="#000"/>
<rect x="431" y="52" width="1" height="1" fill="#ff0000"/>
<rect x="432" y="53" width="1" height="1" fill="#ff0000"/>
<rect x="433" y="53" width="1" height="1" fill="#ff0000"/>
<rect x="434" y="54" width="1" height="1" fill="#ff0000"/>
<rect x="435" y="54" width="1" height="1" fill="#ff0000"/>
<rect x="436" y="55" width="1" height="1" fill="#ff0000"/>
<rect x="436" y="56" width="1" height="1" fill="#ff0000"/>
<rect x="436" y="57" width="1" height="1" fill="#ff0000"/>
<rect x="437" y="58" width="1" height="1" fill="#ff0000"/>
<rect x="437" y="59" width="1" height="1" fill="#ff0000"/>
<rect x="437" y="60" width="1" height="1" fill="#ff0000"/>
<rect x="438" y="60" width="1" height="1" fill="#ff0000"/>
<rect x="439" y="61" width="1" height="1" fill="#ff0000"/>
<rect x="440" y="61" width="1" height="1" fill="#ff0000"/>
<rect x="441" y="61" width="1" height="1" fill="#ff0000"/>
<rect x="441" y="62" width="1" height="1" fill="#ff0000"/>
<rect x="442" y="62" width="1" height="1" fill="#ff0000"/>
<rect x="443" y="62" width="1" height="1" fill="#ff0000"/>
<rect x="444" y="63" width="1" height="1" fill="#ff0000"/>
<rect x="444" y="64" width="1" height="1" fill="#ff0000"/>
<rect x="445" y="65" width="1" height="1" fill="#ff0000"/>
<rect x="446" y="66" width="1" height="1" fill="#ff0000"/>
<rect x="446" y="67" width="1" height="1" fill="#ff0000"/>
<rect x="454" y="52" width="16" height="16" fill="#ece9d8"/>
<rect x="454" y="52" width="1" height="1" fill="#000"/>
<rect x="455" y="53" width="1" height="1" fill="#000"/>
<rect x="456" y="53" width="1" height="1" fill="#000"/>
<rect x="457" y="54" width="1" height="1" fill="#000"/>
<rect x="458" y="54" width="1" height="1" fill="#000"/>
<rect x="459" y="55" width="1" height="1" fill="#000"/>
<rect x="459" y="56" width="1" height="1" fill="#000"/>
<rect x="459" y="57" width="1" height="1" fill="#000"/>
<rect x="460" y="58" width="1" height="1" fill="#000"/>
<rect x="460" y="59" width="1" height="1" fill="#000"/>
<rect x="460" y="60" width="1" height="1" fill="#000"/>
<rect x="461" y="60" width="1" height="1" fill="#000"/>
<rect x="462" y="61" width="1" height="1" fill="#000"/>
<rect x="463" y="61" width="1" height="1" fill="#000"/>
<rect x="464" y="61" width="1" height="1" fill="#000"/>
<rect x="465" y="62" width="1" height="1" fill="#000"/>
<rect x="466" y="62" width="1" height="1" fill="#000"/>
<rect x="467" y="63" width="1" height="1" fill="#000"/>
<rect x="467" y="64" width="1" height="1" fill="#000"/>
<rect x="468" y="65" width="1" height="1" fill="#000"/>
<rect x="469" y="66" width="1" height="1" fill="#000"/>
<rect x="469" y="67" width="1" height="1" fill="#000"/>
<rect x="459" y="54" width="1" height="1" fill="#ff0000"/>
<rect x="461" y="59" width="1" height="1" fill="#ff0000"/>
<rect x="467" y="62" width="1" height="1" fill="#ff0000"/>
<rect x="461" y="53" width="2" height="2" fill="#ff0000"/>
<rect x="463" y="58" width="2" height="2" fill="#ff0000"/>
<rect x="469" y="61" width="1" height="2" fill="#ff0000"/>
<rect x="456" y="64" width="2" height="1" fill="#ffffff"/>
<rect x="477" y="52" width="16" height="16" fill="#ece9d8"/>
<rect x="478" y="56" width="1" height="1" fill="#000"/>
<rect x="482" y="56" width="1" height="1" fill="#000"/>
<rect x="479" y="57" width="1" height="1" fill="#000"/>
<rect x="481" y="57" width="1" height="1" fill="#000"/>
<rect x="478" y="58" width="1" height="1" fill="#000"/>
<rect x="479" y="58" width="1" height="1" fill="#000"/>
<rect x="480" y="58" width="1" height="1" fill="#000"/>
<rect x="481" y="58" width="1" height="1" fill="#000"/>
<rect x="482" y="58" width="1" height="1" fill="#000"/>
<rect x="478" y="59" width="1" height="1" fill="#000"/>
<rect x="482" y="59" width="1" height="1" fill="#000"/>
<rect x="478" y="60" width="1" height="1" fill="#000"/>
<rect x="479" y="60" width="1" height="1" fill="#000"/>
<rect x="480" y="60" width="1" height="1" fill="#000"/>
<rect x="481" y="60" width="1" height="1" fill="#000"/>
<rect x="482" y="60" width="1" height="1" fill="#000"/>
<rect x="477" y="61" width="1" height="1" fill="#000"/>
<rect x="477" y="62" width="1" height="1" fill="#000"/>
<rect x="479" y="61" width="1" height="1" fill="#000"/>
<rect x="480" y="61" width="1" height="1" fill="#000"/>
<rect x="482" y="61" width="1" height="1" fill="#000"/>
<rect x="483" y="61" width="1" height="1" fill="#000"/>
<rect x="479" y="62" width="1" height="1" fill="#000"/>
<rect x="481" y="62" width="1" height="1" fill="#000"/>
<rect x="483" y="62" width="1" height="1" fill="#000"/>
<rect x="479" y="63" width="1" height="1" fill="#000"/>
<rect x="480" y="63" width="1" height="1" fill="#000"/>
<rect x="481" y="63" width="1" height="1" fill="#000"/>
<rect x="482" y="63" width="1" height="1" fill="#000"/>
<rect x="483" y="63" width="1" height="1" fill="#000"/>
<rect x="491" y="57" width="1" height="1" fill="#000"/>
<rect x="490" y="58" width="1" height="1" fill="#000"/>
<rect x="489" y="59" width="1" height="1" fill="#000"/>
<rect x="489" y="61" width="1" height="1" fill="#000"/>
<rect x="490" y="62" width="1" height="1" fill="#000"/>
<rect x="491" y="62" width="1" height="1" fill="#000"/>
<rect x="492" y="63" width="1" height="1" fill="#000"/>
<rect x="488" y="63" width="1" height="1" fill="#000"/>
<rect x="489" y="63" width="1" height="1" fill="#000"/>
<rect x="487" y="56" width="1" height="1" fill="#000"/>
<rect x="487" y="57" width="1" height="1" fill="#000"/>
<rect x="487" y="58" width="1" height="1" fill="#000"/>
<rect x="487" y="59" width="1" height="1" fill="#000"/>
<rect x="487" y="60" width="1" height="1" fill="#000"/>
<rect x="487" y="61" width="1" height="1" fill="#000"/>
<rect x="487" y="62" width="1" height="1" fill="#000"/>
<rect x="487" y="63" width="1" height="1" fill="#000"/>
<rect x="485" y="60" width="1" height="1" fill="#000"/>
<rect x="486" y="60" width="1" height="1" fill="#000"/>
<rect x="487" y="60" width="1" height="1" fill="#000"/>
<rect x="488" y="60" width="1" height="1" fill="#000"/>
<rect x="489" y="60" width="1" height="1" fill="#000"/>
<rect x="490" y="60" width="1" height="1" fill="#000"/>
<rect x="491" y="60" width="1" height="1" fill="#000"/>
<rect x="492" y="60" width="1" height="1" fill="#000"/>
<rect x="500" y="52" width="16" height="16" fill="#eae9e6"/>
<rect x="503" y="52" width="4" height="1" fill="#ffff00"/>
<rect x="503" y="53" width="1" height="1" fill="#ffff00"/>
<rect x="507" y="53" width="5" height="1" fill="#ffff00"/>
<rect x="504" y="53" width="3" height="1" fill="#00ffff"/>
<rect x="502" y="54" width="1" height="1" fill="#ffff00"/>
<rect x="511" y="54" width="1" height="1" fill="#ffff00"/>
<rect x="503" y="54" width="8" height="1" fill="#00ffff"/>
<rect x="502" y="55" width="1" height="1" fill="#ffff00"/>
<rect x="512" y="55" width="1" height="1" fill="#ffff00"/>
<rect x="503" y="55" width="9" height="1" fill="#00ffff"/>
<rect x="502" y="56" width="1" height="1" fill="#ffff00"/>
<rect x="512" y="56" width="1" height="1" fill="#ffff00"/>
<rect x="503" y="56" width="9" height="1" fill="#00ffff"/>
<rect x="501" y="57" width="1" height="1" fill="#ffff00"/>
<rect x="513" y="57" width="1" height="1" fill="#ffff00"/>
<rect x="502" y="57" width="11" height="1" fill="#00ffff"/>
<rect x="501" y="58" width="1" height="1" fill="#ffff00"/>
<rect x="513" y="58" width="1" height="1" fill="#ffff00"/>
<rect x="502" y="58" width="11" height="1" fill="#00ffff"/>
<rect x="501" y="59" width="1" height="1" fill="#ffff00"/>
<rect x="514" y="59" width="1" height="1" fill="#ffff00"/>
<rect x="502" y="59" width="12" height="1" fill="#00ffff"/>
<rect x="501" y="60" width="1" height="1" fill="#ffff00"/>
<rect x="514" y="60" width="1" height="1" fill="#ffff00"/>
<rect x="502" y="60" width="12" height="1" fill="#00ffff"/>
<rect x="500" y="61" width="1" height="1" fill="#ffff00"/>
<rect x="515" y="61" width="1" height="1" fill="#ffff00"/>
<rect x="501" y="61" width="14" height="1" fill="#00ffff"/>
<rect x="500" y="62" width="1" height="1" fill="#ffff00"/>
<rect x="515" y="62" width="1" height="1" fill="#ffff00"/>
<rect x="501" y="62" width="14" height="1" fill="#00ffff"/>
<rect x="501" y="63" width="2" height="1" fill="#ffff00"/>
<rect x="514" y="63" width="1" height="1" fill="#ffff00"/>
<rect x="503" y="63" width="11" height="1" fill="#00ffff"/>
<rect x="503" y="64" width="2" height="1" fill="#ffff00"/>
<rect x="512" y="64" width="2" height="1" fill="#ffff00"/>
<rect x="505" y="64" width="7" height="1" fill="#00ffff"/>
<rect x="505" y="65" width="2" height="1" fill="#ffff00"/>
<rect x="511" y="65" width="1" height="1" fill="#ffff00"/>
<rect x="507" y="65" width="4" height="1" fill="#00ffff"/>
<rect x="507" y="66" width="2" height="1" fill="#ffff00"/>
<rect x="510" y="66" width="1" height="1" fill="#ffff00"/>
<rect x="509" y="66" width="1" height="1" fill="#00ffff"/>
<rect x="509" y="67" width="1" height="1" fill="#ffff00"/>
<rect x="505" y="59" width="5" height="2" fill="#000"/></svg>
</body></html>
